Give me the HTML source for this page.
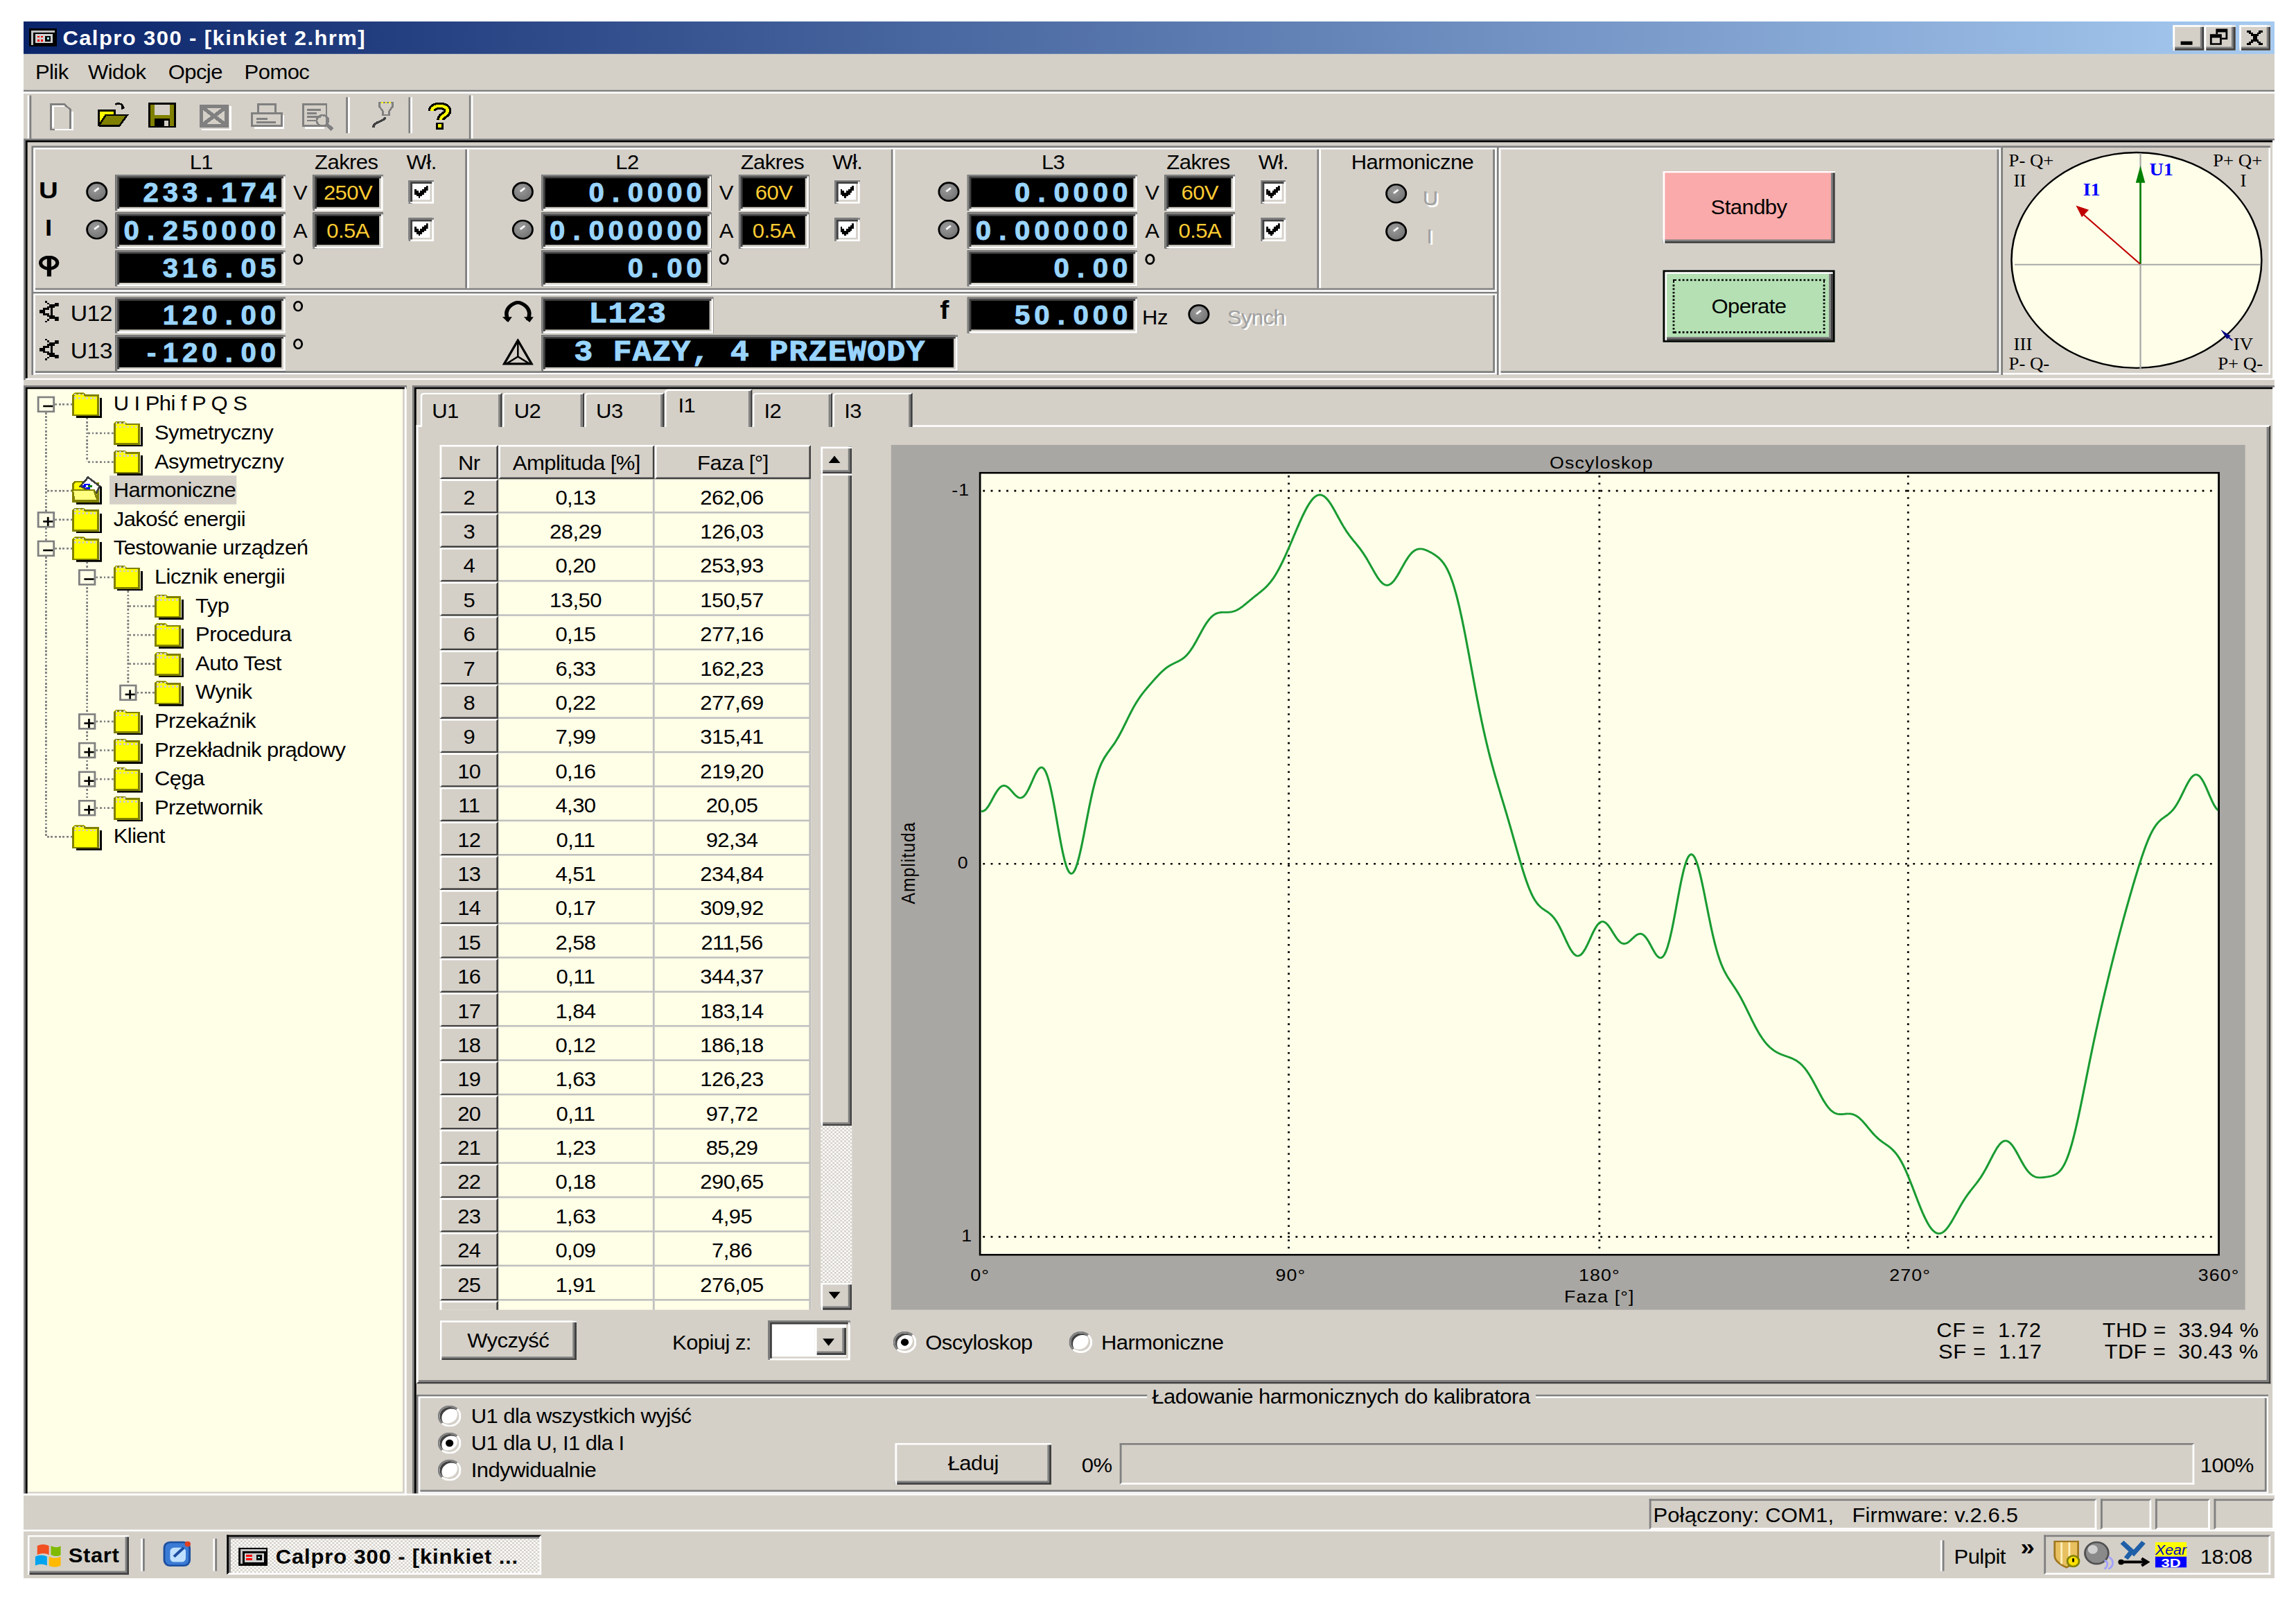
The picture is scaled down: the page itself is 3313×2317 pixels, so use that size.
<!DOCTYPE html><html><head><meta charset="utf-8"><style>
html,body{margin:0;padding:0;background:#fff;}
body{width:3313px;height:2317px;overflow:hidden;position:relative;}
#win{position:absolute;left:34px;top:31px;width:1152px;height:864px;transform:scale(2.8194,2.5995);transform-origin:0 0;background:#D4D0C8;overflow:hidden;font-family:"Liberation Sans",sans-serif;font-size:11px;color:#000;}
.a{position:absolute;box-sizing:border-box;}
.t{position:absolute;white-space:nowrap;line-height:12px;letter-spacing:-0.2px;}
.sunk{box-shadow:inset 1px 1px #808080,inset -1px -1px #fff,inset 2px 2px #404040,inset -2px -2px #D4D0C8;}
.sunk1{box-shadow:inset 1px 1px #808080,inset -1px -1px #fff;}
.rais{background:#D4D0C8;box-shadow:inset 1px 1px #fff,inset -1px -1px #404040,inset -2px -2px #808080;}
.rais1{box-shadow:inset 1px 1px #fff,inset -1px -1px #808080;}
.disp{background:#000;box-shadow:inset 1px 1px #808080,inset -1px -1px #fff,inset 2px 2px #404040,inset -2px -2px #D4D0C8;}
.dt{position:absolute;font-family:"Liberation Mono",monospace;font-weight:bold;color:#99D5FF;white-space:nowrap;}
.led{position:absolute;width:11px;height:11px;border-radius:50%;box-sizing:border-box;border:1px solid #000;background:radial-gradient(circle at 40% 35%,#9a9a9a 0,#858585 45%,#6a6a6a 100%);}
.led:after{content:"";position:absolute;left:2.5px;top:2.5px;width:2.5px;height:1.2px;background:#fff;transform:rotate(-40deg);}
.cb{position:absolute;width:13px;height:13px;background:#fff;box-sizing:border-box;box-shadow:inset 1px 1px #808080,inset -1px -1px #fff,inset 2px 2px #404040,inset -2px -2px #D4D0C8;}
.rad{position:absolute;width:12px;height:12px;border-radius:50%;box-sizing:border-box;background:#fff;border:1px solid;border-color:#808080 #fff #fff #808080;box-shadow:inset 1px 1px #404040, inset -1px -1px #D4D0C8;}

.etch{box-shadow:inset 1px 1px #808080,inset -1px -1px #fff,inset 2px 2px #fff,inset -2px -2px #808080;}
.cedge{box-shadow:inset 1px 1px #808080,inset -1px -1px #fff,inset 2px 2px #000,inset -2px -2px #D4D0C8;}
</style></head><body><div id="win">
<div class="a " style="left:0px;top:0px;width:1152px;height:18px;background:linear-gradient(to right,#0A246A,#A6CAF0);"></div>
<svg class="a" style="left:2px;top:1px" width="16" height="16" viewBox="0 0 16 16" shape-rendering="crispEdges">
<rect x="1" y="3" width="14" height="10" fill="#000"/><rect x="2" y="4" width="12" height="8" fill="#C0C0C0"/>
<rect x="3" y="5" width="11" height="7" fill="#000"/><rect x="4" y="6" width="9" height="5" fill="#D0D0D0"/>
<rect x="5" y="7" width="1" height="1" fill="#f00"/><rect x="5" y="9" width="1" height="1" fill="#f00"/><rect x="7" y="7" width="1" height="1" fill="#f00"/><rect x="7" y="9" width="1" height="1" fill="#f00"/>
<rect x="9" y="7" width="3" height="3" fill="#000"/><rect x="10" y="8" width="1" height="1" fill="#9ff"/></svg>
<div class="t " style="left:20px;top:3px;color:#fff;font-weight:bold;font-size:11px;letter-spacing:0.5px;">Calpro 300 - [kinkiet 2.hrm]</div>
<div class="a rais" style="left:1100px;top:2px;width:16px;height:14px;"><div class="a" style="left:4px;top:9px;width:6px;height:2px;background:#000"></div></div>
<div class="a rais" style="left:1116px;top:2px;width:16px;height:14px;"><div class="a" style="left:6px;top:2px;width:6px;height:6px;border:1px solid #000;border-top-width:2px"></div><div class="a" style="left:3px;top:5px;width:6px;height:6px;border:1px solid #000;border-top-width:2px;background:#D4D0C8"></div></div>
<div class="a rais" style="left:1134px;top:2px;width:16px;height:14px;"><svg style="position:absolute;left:0;top:0" width="16" height="14" viewBox="0 0 16 14" shape-rendering="crispEdges"><path d="M4 3h2v1h1v1h2V4h1V3h2v1h-1v1h-1v1h-1v2h1v1h1v1h1v1h-2v-1H9V9H7v1H6v1H4v-1h1V9h1V8h1V6H6V5H5V4H4z" fill="#000"/></svg></div>
<div class="t " style="left:6px;top:22px;">Plik</div>
<div class="t " style="left:33px;top:22px;">Widok</div>
<div class="t " style="left:74px;top:22px;">Opcje</div>
<div class="t " style="left:113px;top:22px;">Pomoc</div>
<div class="a" style="left:0px;top:38px;width:1152px;height:1px;background:#808080"></div>
<div class="a" style="left:0px;top:39px;width:1152px;height:1px;background:#fff"></div>
<div class="a" style="left:2px;top:41px;width:1px;height:24px;background:#fff"></div>
<div class="a" style="left:3px;top:41px;width:1px;height:24px;background:#808080"></div>
<div class="a" style="left:228px;top:41px;width:1px;height:25px;background:#808080"></div>
<div class="a" style="left:229px;top:41px;width:1px;height:25px;background:#fff"></div>
<div class="a" style="left:165px;top:42px;width:1px;height:20px;background:#808080"></div>
<div class="a" style="left:166px;top:42px;width:1px;height:20px;background:#fff"></div>
<div class="a" style="left:197px;top:42px;width:1px;height:20px;background:#808080"></div>
<div class="a" style="left:198px;top:42px;width:1px;height:20px;background:#fff"></div>
<svg class="a" style="left:12px;top:45px" width="16" height="16" viewBox="0 0 16 16" shape-rendering="crispEdges">
<path d="M2 1h7l3 3v11H2z" fill="#D4D0C8" stroke="#808080" stroke-width="1"/><path d="M3 14V2h6" fill="none" stroke="#fff"/><path d="M4 15h9V5" fill="none" stroke="#fff"/></svg>
<svg class="a" style="left:38px;top:44px" width="16" height="16" viewBox="0 0 16 16" shape-rendering="crispEdges">
<path d="M9 2c2-1 4 0 4 2" fill="none" stroke="#000"/><path d="M12 3l2 1-2 1z" fill="#000"/>
<rect x="0" y="5" width="9" height="9" fill="#000"/><rect x="1" y="6" width="7" height="7" fill="#FFFF00"/>
<path d="M1 13L4 8h11l-4 6H1z" fill="#808000" stroke="#000"/></svg>
<svg class="a" style="left:63px;top:44px" width="16" height="16" viewBox="0 0 16 16" shape-rendering="crispEdges">
<rect x="1" y="1" width="14" height="14" fill="#000"/><rect x="2" y="2" width="12" height="12" fill="#808000"/>
<rect x="4" y="2" width="8" height="6" fill="#D4D0C8"/><rect x="4" y="10" width="8" height="4" fill="#000"/><rect x="9" y="11" width="2" height="3" fill="#D4D0C8"/></svg>
<svg class="a" style="left:89px;top:45px" width="18" height="16" viewBox="0 0 18 16" shape-rendering="crispEdges">
<rect x="1" y="1" width="15" height="13" fill="#808080"/><rect x="3" y="3" width="11" height="9" fill="#D4D0C8"/><path d="M3 3l11 9M3 12l11-9" stroke="#808080" stroke-width="2"/><path d="M2 15h15V2" stroke="#fff" fill="none"/></svg>
<svg class="a" style="left:116px;top:45px" width="18" height="16" viewBox="0 0 18 16" shape-rendering="crispEdges">
<path d="M4 1h9v5H4z" fill="none" stroke="#808080"/><path d="M1 6h15v7H1z" fill="#D4D0C8" stroke="#808080"/><path d="M3 9h6M3 11h10" stroke="#808080"/><path d="M2 14h15V7" stroke="#fff" fill="none"/></svg>
<svg class="a" style="left:142px;top:45px" width="18" height="16" viewBox="0 0 18 16" shape-rendering="crispEdges">
<path d="M1 1h12v12H1z" fill="#D4D0C8" stroke="#808080"/><path d="M3 4h7M3 6h5M3 8h7M3 10h5" stroke="#808080"/><circle cx="11" cy="10" r="3" fill="none" stroke="#808080"/><path d="M13 12l3 3" stroke="#808080" stroke-width="2"/><path d="M2 14h10" stroke="#fff"/></svg>
<svg class="a" style="left:178px;top:44px" width="12" height="17" viewBox="0 0 12 17" shape-rendering="crispEdges">
<path d="M4 1h7v2l-2 3v2H6V6L4 3z" fill="#D4D0C8" stroke="#808080"/><path d="M5 1h5" stroke="#ff0" stroke-dasharray="1 1"/><path d="M7 9c0 3-6 2-6 6" fill="none" stroke="#404040" stroke-width="1.2"/></svg>
<svg class="a" style="left:206px;top:44px" width="14" height="16" viewBox="0 0 14 16" shape-rendering="crispEdges">
<path d="M3 5.5c0-3.5 8-3.5 8 0c0 2.5-3.5 2.5-3.5 5" fill="none" stroke="#000" stroke-width="4"/><path d="M3 5.5c0-3.5 8-3.5 8 0c0 2.5-3.5 2.5-3.5 5" fill="none" stroke="#FFFF00" stroke-width="1.6"/><rect x="5" y="12" width="4" height="4" fill="#000"/><rect x="6" y="13" width="2" height="2" fill="#ff0"/></svg>
<div class="a cedge" style="left:0px;top:65px;width:1152px;height:134px;"></div>
<div class="a etch" style="left:4px;top:69px;width:750px;height:81px;"></div>
<div class="a etch" style="left:4px;top:150px;width:750px;height:46px;"></div>
<div class="a etch" style="left:754px;top:69px;width:258px;height:127px;"></div>
<div class="a " style="left:1012px;top:69px;width:138px;height:127px;box-shadow:inset 1px 1px #808080,inset -1px -1px #fff"></div>
<div class="a" style="left:226px;top:71px;width:1px;height:77px;background:#808080"></div>
<div class="a" style="left:227px;top:71px;width:1px;height:77px;background:#fff"></div>
<div class="a" style="left:444px;top:71px;width:1px;height:77px;background:#808080"></div>
<div class="a" style="left:445px;top:71px;width:1px;height:77px;background:#fff"></div>
<div class="a" style="left:662px;top:71px;width:1px;height:77px;background:#808080"></div>
<div class="a" style="left:663px;top:71px;width:1px;height:77px;background:#fff"></div>
<div class="t " style="left:85px;top:72px;">L1</div>
<div class="t " style="left:149px;top:72px;">Zakres</div>
<div class="t " style="left:196px;top:72px;">Wł.</div>
<div class="led" style="left:32px;top:89px"></div>
<div class="led" style="left:32px;top:110px"></div>
<div class="a disp" style="left:47px;top:85px;width:87px;height:20px;"><div class="dt" style="left:2px;right:3.5px;top:0px;height:20px;line-height:20px;text-align:right;font-size:15px;color:#99D5FF;font-family:'Liberation Sans';letter-spacing:0;-webkit-text-stroke:0.35px #99D5FF"><span style="display:inline-block;width:10px;text-align:center"><span style="display:inline-block;transform:scaleX(0.95)">2</span></span><span style="display:inline-block;width:10px;text-align:center"><span style="display:inline-block;transform:scaleX(0.95)">3</span></span><span style="display:inline-block;width:10px;text-align:center"><span style="display:inline-block;transform:scaleX(0.95)">3</span></span><span style="display:inline-block;width:10px;text-align:center"><span style="display:inline-block;transform:scaleX(0.95)">.</span></span><span style="display:inline-block;width:10px;text-align:center"><span style="display:inline-block;transform:scaleX(0.95)">1</span></span><span style="display:inline-block;width:10px;text-align:center"><span style="display:inline-block;transform:scaleX(0.95)">7</span></span><span style="display:inline-block;width:10px;text-align:center"><span style="display:inline-block;transform:scaleX(0.95)">4</span></span></div></div>
<div class="a disp" style="left:47px;top:106px;width:87px;height:20px;"><div class="dt" style="left:2px;right:3.5px;top:0px;height:20px;line-height:20px;text-align:right;font-size:15px;color:#99D5FF;font-family:'Liberation Sans';letter-spacing:0;-webkit-text-stroke:0.35px #99D5FF"><span style="display:inline-block;width:10px;text-align:center"><span style="display:inline-block;transform:scaleX(0.95)">0</span></span><span style="display:inline-block;width:10px;text-align:center"><span style="display:inline-block;transform:scaleX(0.95)">.</span></span><span style="display:inline-block;width:10px;text-align:center"><span style="display:inline-block;transform:scaleX(0.95)">2</span></span><span style="display:inline-block;width:10px;text-align:center"><span style="display:inline-block;transform:scaleX(0.95)">5</span></span><span style="display:inline-block;width:10px;text-align:center"><span style="display:inline-block;transform:scaleX(0.95)">0</span></span><span style="display:inline-block;width:10px;text-align:center"><span style="display:inline-block;transform:scaleX(0.95)">0</span></span><span style="display:inline-block;width:10px;text-align:center"><span style="display:inline-block;transform:scaleX(0.95)">0</span></span><span style="display:inline-block;width:10px;text-align:center"><span style="display:inline-block;transform:scaleX(0.95)">0</span></span></div></div>
<div class="a disp" style="left:47px;top:127px;width:87px;height:20px;"><div class="dt" style="left:2px;right:3.5px;top:0px;height:20px;line-height:20px;text-align:right;font-size:15px;color:#99D5FF;font-family:'Liberation Sans';letter-spacing:0;-webkit-text-stroke:0.35px #99D5FF"><span style="display:inline-block;width:10px;text-align:center"><span style="display:inline-block;transform:scaleX(0.95)">3</span></span><span style="display:inline-block;width:10px;text-align:center"><span style="display:inline-block;transform:scaleX(0.95)">1</span></span><span style="display:inline-block;width:10px;text-align:center"><span style="display:inline-block;transform:scaleX(0.95)">6</span></span><span style="display:inline-block;width:10px;text-align:center"><span style="display:inline-block;transform:scaleX(0.95)">.</span></span><span style="display:inline-block;width:10px;text-align:center"><span style="display:inline-block;transform:scaleX(0.95)">0</span></span><span style="display:inline-block;width:10px;text-align:center"><span style="display:inline-block;transform:scaleX(0.95)">5</span></span></div></div>
<div class="t " style="left:138px;top:89px;">V</div>
<div class="t " style="left:138px;top:110px;">A</div>
<div class="a" style="left:138px;top:129px;width:5px;height:6px;border:1px solid #000;border-radius:50%"></div>
<div class="a disp" style="left:148px;top:85px;width:36px;height:20px;"><div class="t" style="left:0;width:36px;top:4px;text-align:center;color:#FFCC33;font-size:11px;letter-spacing:-0.2px">250V</div></div>
<div class="a disp" style="left:148px;top:106px;width:36px;height:20px;"><div class="t" style="left:0;width:36px;top:4px;text-align:center;color:#FFCC33;font-size:11px;letter-spacing:-0.2px">0.5A</div></div>
<div class="cb" style="left:197px;top:88px"><svg style="position:absolute;left:3px;top:3px" width="7" height="7" viewBox="0 0 7 7" shape-rendering="crispEdges"><path d="M0 2h1v1h1v1h1V3h1V2h1V1h1V0h1v3H6v1H5v1H4v1H3v1H2V6H1V5H0z" fill="#000"/></svg></div>
<div class="cb" style="left:197px;top:109px"><svg style="position:absolute;left:3px;top:3px" width="7" height="7" viewBox="0 0 7 7" shape-rendering="crispEdges"><path d="M0 2h1v1h1v1h1V3h1V2h1V1h1V0h1v3H6v1H5v1H4v1H3v1H2V6H1V5H0z" fill="#000"/></svg></div>
<div class="t " style="left:303px;top:72px;">L2</div>
<div class="t " style="left:367px;top:72px;">Zakres</div>
<div class="t " style="left:414px;top:72px;">Wł.</div>
<div class="led" style="left:250px;top:89px"></div>
<div class="led" style="left:250px;top:110px"></div>
<div class="a disp" style="left:265px;top:85px;width:87px;height:20px;"><div class="dt" style="left:2px;right:3.5px;top:0px;height:20px;line-height:20px;text-align:right;font-size:15px;color:#99D5FF;font-family:'Liberation Sans';letter-spacing:0;-webkit-text-stroke:0.35px #99D5FF"><span style="display:inline-block;width:10px;text-align:center"><span style="display:inline-block;transform:scaleX(0.95)">0</span></span><span style="display:inline-block;width:10px;text-align:center"><span style="display:inline-block;transform:scaleX(0.95)">.</span></span><span style="display:inline-block;width:10px;text-align:center"><span style="display:inline-block;transform:scaleX(0.95)">0</span></span><span style="display:inline-block;width:10px;text-align:center"><span style="display:inline-block;transform:scaleX(0.95)">0</span></span><span style="display:inline-block;width:10px;text-align:center"><span style="display:inline-block;transform:scaleX(0.95)">0</span></span><span style="display:inline-block;width:10px;text-align:center"><span style="display:inline-block;transform:scaleX(0.95)">0</span></span></div></div>
<div class="a disp" style="left:265px;top:106px;width:87px;height:20px;"><div class="dt" style="left:2px;right:3.5px;top:0px;height:20px;line-height:20px;text-align:right;font-size:15px;color:#99D5FF;font-family:'Liberation Sans';letter-spacing:0;-webkit-text-stroke:0.35px #99D5FF"><span style="display:inline-block;width:10px;text-align:center"><span style="display:inline-block;transform:scaleX(0.95)">0</span></span><span style="display:inline-block;width:10px;text-align:center"><span style="display:inline-block;transform:scaleX(0.95)">.</span></span><span style="display:inline-block;width:10px;text-align:center"><span style="display:inline-block;transform:scaleX(0.95)">0</span></span><span style="display:inline-block;width:10px;text-align:center"><span style="display:inline-block;transform:scaleX(0.95)">0</span></span><span style="display:inline-block;width:10px;text-align:center"><span style="display:inline-block;transform:scaleX(0.95)">0</span></span><span style="display:inline-block;width:10px;text-align:center"><span style="display:inline-block;transform:scaleX(0.95)">0</span></span><span style="display:inline-block;width:10px;text-align:center"><span style="display:inline-block;transform:scaleX(0.95)">0</span></span><span style="display:inline-block;width:10px;text-align:center"><span style="display:inline-block;transform:scaleX(0.95)">0</span></span></div></div>
<div class="a disp" style="left:265px;top:127px;width:87px;height:20px;"><div class="dt" style="left:2px;right:3.5px;top:0px;height:20px;line-height:20px;text-align:right;font-size:15px;color:#99D5FF;font-family:'Liberation Sans';letter-spacing:0;-webkit-text-stroke:0.35px #99D5FF"><span style="display:inline-block;width:10px;text-align:center"><span style="display:inline-block;transform:scaleX(0.95)">0</span></span><span style="display:inline-block;width:10px;text-align:center"><span style="display:inline-block;transform:scaleX(0.95)">.</span></span><span style="display:inline-block;width:10px;text-align:center"><span style="display:inline-block;transform:scaleX(0.95)">0</span></span><span style="display:inline-block;width:10px;text-align:center"><span style="display:inline-block;transform:scaleX(0.95)">0</span></span></div></div>
<div class="t " style="left:356px;top:89px;">V</div>
<div class="t " style="left:356px;top:110px;">A</div>
<div class="a" style="left:356px;top:129px;width:5px;height:6px;border:1px solid #000;border-radius:50%"></div>
<div class="a disp" style="left:366px;top:85px;width:36px;height:20px;"><div class="t" style="left:0;width:36px;top:4px;text-align:center;color:#FFCC33;font-size:11px;letter-spacing:-0.2px">60V</div></div>
<div class="a disp" style="left:366px;top:106px;width:36px;height:20px;"><div class="t" style="left:0;width:36px;top:4px;text-align:center;color:#FFCC33;font-size:11px;letter-spacing:-0.2px">0.5A</div></div>
<div class="cb" style="left:415px;top:88px"><svg style="position:absolute;left:3px;top:3px" width="7" height="7" viewBox="0 0 7 7" shape-rendering="crispEdges"><path d="M0 2h1v1h1v1h1V3h1V2h1V1h1V0h1v3H6v1H5v1H4v1H3v1H2V6H1V5H0z" fill="#000"/></svg></div>
<div class="cb" style="left:415px;top:109px"><svg style="position:absolute;left:3px;top:3px" width="7" height="7" viewBox="0 0 7 7" shape-rendering="crispEdges"><path d="M0 2h1v1h1v1h1V3h1V2h1V1h1V0h1v3H6v1H5v1H4v1H3v1H2V6H1V5H0z" fill="#000"/></svg></div>
<div class="t " style="left:521px;top:72px;">L3</div>
<div class="t " style="left:585px;top:72px;">Zakres</div>
<div class="t " style="left:632px;top:72px;">Wł.</div>
<div class="led" style="left:468px;top:89px"></div>
<div class="led" style="left:468px;top:110px"></div>
<div class="a disp" style="left:483px;top:85px;width:87px;height:20px;"><div class="dt" style="left:2px;right:3.5px;top:0px;height:20px;line-height:20px;text-align:right;font-size:15px;color:#99D5FF;font-family:'Liberation Sans';letter-spacing:0;-webkit-text-stroke:0.35px #99D5FF"><span style="display:inline-block;width:10px;text-align:center"><span style="display:inline-block;transform:scaleX(0.95)">0</span></span><span style="display:inline-block;width:10px;text-align:center"><span style="display:inline-block;transform:scaleX(0.95)">.</span></span><span style="display:inline-block;width:10px;text-align:center"><span style="display:inline-block;transform:scaleX(0.95)">0</span></span><span style="display:inline-block;width:10px;text-align:center"><span style="display:inline-block;transform:scaleX(0.95)">0</span></span><span style="display:inline-block;width:10px;text-align:center"><span style="display:inline-block;transform:scaleX(0.95)">0</span></span><span style="display:inline-block;width:10px;text-align:center"><span style="display:inline-block;transform:scaleX(0.95)">0</span></span></div></div>
<div class="a disp" style="left:483px;top:106px;width:87px;height:20px;"><div class="dt" style="left:2px;right:3.5px;top:0px;height:20px;line-height:20px;text-align:right;font-size:15px;color:#99D5FF;font-family:'Liberation Sans';letter-spacing:0;-webkit-text-stroke:0.35px #99D5FF"><span style="display:inline-block;width:10px;text-align:center"><span style="display:inline-block;transform:scaleX(0.95)">0</span></span><span style="display:inline-block;width:10px;text-align:center"><span style="display:inline-block;transform:scaleX(0.95)">.</span></span><span style="display:inline-block;width:10px;text-align:center"><span style="display:inline-block;transform:scaleX(0.95)">0</span></span><span style="display:inline-block;width:10px;text-align:center"><span style="display:inline-block;transform:scaleX(0.95)">0</span></span><span style="display:inline-block;width:10px;text-align:center"><span style="display:inline-block;transform:scaleX(0.95)">0</span></span><span style="display:inline-block;width:10px;text-align:center"><span style="display:inline-block;transform:scaleX(0.95)">0</span></span><span style="display:inline-block;width:10px;text-align:center"><span style="display:inline-block;transform:scaleX(0.95)">0</span></span><span style="display:inline-block;width:10px;text-align:center"><span style="display:inline-block;transform:scaleX(0.95)">0</span></span></div></div>
<div class="a disp" style="left:483px;top:127px;width:87px;height:20px;"><div class="dt" style="left:2px;right:3.5px;top:0px;height:20px;line-height:20px;text-align:right;font-size:15px;color:#99D5FF;font-family:'Liberation Sans';letter-spacing:0;-webkit-text-stroke:0.35px #99D5FF"><span style="display:inline-block;width:10px;text-align:center"><span style="display:inline-block;transform:scaleX(0.95)">0</span></span><span style="display:inline-block;width:10px;text-align:center"><span style="display:inline-block;transform:scaleX(0.95)">.</span></span><span style="display:inline-block;width:10px;text-align:center"><span style="display:inline-block;transform:scaleX(0.95)">0</span></span><span style="display:inline-block;width:10px;text-align:center"><span style="display:inline-block;transform:scaleX(0.95)">0</span></span></div></div>
<div class="t " style="left:574px;top:89px;">V</div>
<div class="t " style="left:574px;top:110px;">A</div>
<div class="a" style="left:574px;top:129px;width:5px;height:6px;border:1px solid #000;border-radius:50%"></div>
<div class="a disp" style="left:584px;top:85px;width:36px;height:20px;"><div class="t" style="left:0;width:36px;top:4px;text-align:center;color:#FFCC33;font-size:11px;letter-spacing:-0.2px">60V</div></div>
<div class="a disp" style="left:584px;top:106px;width:36px;height:20px;"><div class="t" style="left:0;width:36px;top:4px;text-align:center;color:#FFCC33;font-size:11px;letter-spacing:-0.2px">0.5A</div></div>
<div class="cb" style="left:633px;top:88px"><svg style="position:absolute;left:3px;top:3px" width="7" height="7" viewBox="0 0 7 7" shape-rendering="crispEdges"><path d="M0 2h1v1h1v1h1V3h1V2h1V1h1V0h1v3H6v1H5v1H4v1H3v1H2V6H1V5H0z" fill="#000"/></svg></div>
<div class="cb" style="left:633px;top:109px"><svg style="position:absolute;left:3px;top:3px" width="7" height="7" viewBox="0 0 7 7" shape-rendering="crispEdges"><path d="M0 2h1v1h1v1h1V3h1V2h1V1h1V0h1v3H6v1H5v1H4v1H3v1H2V6H1V5H0z" fill="#000"/></svg></div>
<div class="t " style="left:8px;top:88px;font-weight:bold;font-size:13px;letter-spacing:0;transform:scaleX(1.05)">U</div>
<div class="t " style="left:11px;top:109px;font-weight:bold;font-size:13px;letter-spacing:0">I</div>
<svg class="a" style="left:7px;top:130px" width="12" height="12" viewBox="0 0 12 12"><ellipse cx="6" cy="4" rx="4.3" ry="3.2" fill="none" stroke="#000" stroke-width="1.8"/><rect x="5" y="0" width="2.2" height="11.5" fill="#000"/></svg>
<div class="t " style="left:679.5px;top:72px;">Harmoniczne</div>
<div class="led" style="left:697px;top:90px"></div>
<div class="led" style="left:697px;top:111px"></div>
<div class="t " style="left:716px;top:92px;text-shadow:1px 1px #fff;color:#A0A0A0">U</div>
<div class="t " style="left:718px;top:113px;color:#A0A0A0;text-shadow:1px 1px #fff">I</div>
<svg class="a" style="left:8px;top:155px" width="10" height="12" viewBox="0 0 10 12" shape-rendering="crispEdges"><path d="M3 0h1v1h-1zM4 1h1v1h-1zM8 1h1v1h-1zM9 1h1v1h-1zM5 2h1v1h-1zM6 2h1v1h-1zM7 2h1v1h-1zM8 2h1v1h-1zM9 2h1v1h-1zM4 3h1v1h-1zM5 3h1v1h-1zM6 3h1v1h-1zM7 3h1v1h-1zM2 4h1v1h-1zM3 4h1v1h-1zM4 4h1v1h-1zM6 4h1v1h-1zM0 5h1v1h-1zM1 5h1v1h-1zM2 5h1v1h-1zM6 5h1v1h-1zM0 6h1v1h-1zM1 6h1v1h-1zM2 6h1v1h-1zM6 6h1v1h-1zM2 7h1v1h-1zM3 7h1v1h-1zM4 7h1v1h-1zM6 7h1v1h-1zM4 8h1v1h-1zM5 8h1v1h-1zM6 8h1v1h-1zM7 8h1v1h-1zM5 9h1v1h-1zM6 9h1v1h-1zM7 9h1v1h-1zM8 9h1v1h-1zM9 9h1v1h-1zM4 10h1v1h-1zM8 10h1v1h-1zM9 10h1v1h-1zM3 11h1v1h-1z" fill="#000"/></svg>
<svg class="a" style="left:8px;top:176px" width="10" height="12" viewBox="0 0 10 12" shape-rendering="crispEdges"><path d="M3 0h1v1h-1zM4 1h1v1h-1zM8 1h1v1h-1zM9 1h1v1h-1zM5 2h1v1h-1zM6 2h1v1h-1zM7 2h1v1h-1zM8 2h1v1h-1zM9 2h1v1h-1zM4 3h1v1h-1zM5 3h1v1h-1zM6 3h1v1h-1zM7 3h1v1h-1zM2 4h1v1h-1zM3 4h1v1h-1zM4 4h1v1h-1zM6 4h1v1h-1zM0 5h1v1h-1zM1 5h1v1h-1zM2 5h1v1h-1zM6 5h1v1h-1zM0 6h1v1h-1zM1 6h1v1h-1zM2 6h1v1h-1zM6 6h1v1h-1zM2 7h1v1h-1zM3 7h1v1h-1zM4 7h1v1h-1zM6 7h1v1h-1zM4 8h1v1h-1zM5 8h1v1h-1zM6 8h1v1h-1zM7 8h1v1h-1zM5 9h1v1h-1zM6 9h1v1h-1zM7 9h1v1h-1zM8 9h1v1h-1zM9 9h1v1h-1zM4 10h1v1h-1zM8 10h1v1h-1zM9 10h1v1h-1zM3 11h1v1h-1z" fill="#000"/></svg>
<div class="t " style="left:24px;top:156px;font-size:12px">U12</div>
<div class="t " style="left:24px;top:177px;font-size:12px">U13</div>
<div class="a disp" style="left:47px;top:153px;width:87px;height:20px;"><div class="dt" style="left:2px;right:3.5px;top:0px;height:20px;line-height:20px;text-align:right;font-size:15px;color:#99D5FF;font-family:'Liberation Sans';letter-spacing:0;-webkit-text-stroke:0.35px #99D5FF"><span style="display:inline-block;width:10px;text-align:center"><span style="display:inline-block;transform:scaleX(0.95)">1</span></span><span style="display:inline-block;width:10px;text-align:center"><span style="display:inline-block;transform:scaleX(0.95)">2</span></span><span style="display:inline-block;width:10px;text-align:center"><span style="display:inline-block;transform:scaleX(0.95)">0</span></span><span style="display:inline-block;width:10px;text-align:center"><span style="display:inline-block;transform:scaleX(0.95)">.</span></span><span style="display:inline-block;width:10px;text-align:center"><span style="display:inline-block;transform:scaleX(0.95)">0</span></span><span style="display:inline-block;width:10px;text-align:center"><span style="display:inline-block;transform:scaleX(0.95)">0</span></span></div></div>
<div class="a disp" style="left:47px;top:174px;width:87px;height:20px;"><div class="dt" style="left:2px;right:3.5px;top:0px;height:20px;line-height:20px;text-align:right;font-size:15px;color:#99D5FF;font-family:'Liberation Sans';letter-spacing:0;-webkit-text-stroke:0.35px #99D5FF"><span style="display:inline-block;width:10px;text-align:center"><span style="display:inline-block;transform:scaleX(0.95)">-</span></span><span style="display:inline-block;width:10px;text-align:center"><span style="display:inline-block;transform:scaleX(0.95)">1</span></span><span style="display:inline-block;width:10px;text-align:center"><span style="display:inline-block;transform:scaleX(0.95)">2</span></span><span style="display:inline-block;width:10px;text-align:center"><span style="display:inline-block;transform:scaleX(0.95)">0</span></span><span style="display:inline-block;width:10px;text-align:center"><span style="display:inline-block;transform:scaleX(0.95)">.</span></span><span style="display:inline-block;width:10px;text-align:center"><span style="display:inline-block;transform:scaleX(0.95)">0</span></span><span style="display:inline-block;width:10px;text-align:center"><span style="display:inline-block;transform:scaleX(0.95)">0</span></span></div></div>
<div class="a" style="left:138px;top:155px;width:5px;height:6px;border:1px solid #000;border-radius:50%"></div>
<div class="a" style="left:138px;top:176px;width:5px;height:6px;border:1px solid #000;border-radius:50%"></div>
<svg class="a" style="left:245px;top:155px" width="16" height="13" viewBox="0 0 16 13">
<path d="M3 11 C0 4 6 1 8 1 C10 1 16 4 13 11" fill="none" stroke="#000" stroke-width="2"/><path d="M0 9h5l-2 3zM11 9h5l-2 3z" fill="#000"/></svg>
<svg class="a" style="left:245px;top:176px" width="16" height="15" viewBox="0 0 16 15">
<path d="M8 1L1 14h14z" fill="none" stroke="#000" stroke-width="1.2"/><path d="M8 1v9M8 10L2 14M8 10l6 4" fill="none" stroke="#000" stroke-width="0.9"/></svg>
<div class="a disp" style="left:265px;top:153px;width:88px;height:20px;"><div class="dt" style="left:2px;right:2px;top:0px;height:20px;line-height:20px;text-align:center;font-size:16px;color:#99D5FF;font-family:'Liberation Mono';letter-spacing:0;-webkit-text-stroke:0.35px #99D5FF"><span style="display:inline-block;width:10px;text-align:center"><span style="display:inline-block;transform:scaleX(1.0)">L</span></span><span style="display:inline-block;width:10px;text-align:center"><span style="display:inline-block;transform:scaleX(1.0)">1</span></span><span style="display:inline-block;width:10px;text-align:center"><span style="display:inline-block;transform:scaleX(1.0)">2</span></span><span style="display:inline-block;width:10px;text-align:center"><span style="display:inline-block;transform:scaleX(1.0)">3</span></span></div></div>
<div class="a disp" style="left:265px;top:174px;width:213px;height:20px;"><div class="dt" style="left:2px;right:2px;top:0px;height:20px;line-height:20px;text-align:center;font-size:16px;color:#99D5FF;font-family:'Liberation Mono';letter-spacing:0;-webkit-text-stroke:0.35px #99D5FF"><span style="display:inline-block;width:10px;text-align:center"><span style="display:inline-block;transform:scaleX(1.0)">3</span></span><span style="display:inline-block;width:10px;text-align:center"><span style="display:inline-block;transform:scaleX(1.0)">&nbsp;</span></span><span style="display:inline-block;width:10px;text-align:center"><span style="display:inline-block;transform:scaleX(1.0)">F</span></span><span style="display:inline-block;width:10px;text-align:center"><span style="display:inline-block;transform:scaleX(1.0)">A</span></span><span style="display:inline-block;width:10px;text-align:center"><span style="display:inline-block;transform:scaleX(1.0)">Z</span></span><span style="display:inline-block;width:10px;text-align:center"><span style="display:inline-block;transform:scaleX(1.0)">Y</span></span><span style="display:inline-block;width:10px;text-align:center"><span style="display:inline-block;transform:scaleX(1.0)">,</span></span><span style="display:inline-block;width:10px;text-align:center"><span style="display:inline-block;transform:scaleX(1.0)">&nbsp;</span></span><span style="display:inline-block;width:10px;text-align:center"><span style="display:inline-block;transform:scaleX(1.0)">4</span></span><span style="display:inline-block;width:10px;text-align:center"><span style="display:inline-block;transform:scaleX(1.0)">&nbsp;</span></span><span style="display:inline-block;width:10px;text-align:center"><span style="display:inline-block;transform:scaleX(1.0)">P</span></span><span style="display:inline-block;width:10px;text-align:center"><span style="display:inline-block;transform:scaleX(1.0)">R</span></span><span style="display:inline-block;width:10px;text-align:center"><span style="display:inline-block;transform:scaleX(1.0)">Z</span></span><span style="display:inline-block;width:10px;text-align:center"><span style="display:inline-block;transform:scaleX(1.0)">E</span></span><span style="display:inline-block;width:10px;text-align:center"><span style="display:inline-block;transform:scaleX(1.0)">W</span></span><span style="display:inline-block;width:10px;text-align:center"><span style="display:inline-block;transform:scaleX(1.0)">O</span></span><span style="display:inline-block;width:10px;text-align:center"><span style="display:inline-block;transform:scaleX(1.0)">D</span></span><span style="display:inline-block;width:10px;text-align:center"><span style="display:inline-block;transform:scaleX(1.0)">Y</span></span></div></div>
<div class="t " style="left:469px;top:154px;font-weight:bold;font-size:14px;letter-spacing:0">f</div>
<div class="a disp" style="left:483px;top:153px;width:87px;height:20px;"><div class="dt" style="left:2px;right:3.5px;top:0px;height:20px;line-height:20px;text-align:right;font-size:15px;color:#99D5FF;font-family:'Liberation Sans';letter-spacing:0;-webkit-text-stroke:0.35px #99D5FF"><span style="display:inline-block;width:10px;text-align:center"><span style="display:inline-block;transform:scaleX(0.95)">5</span></span><span style="display:inline-block;width:10px;text-align:center"><span style="display:inline-block;transform:scaleX(0.95)">0</span></span><span style="display:inline-block;width:10px;text-align:center"><span style="display:inline-block;transform:scaleX(0.95)">.</span></span><span style="display:inline-block;width:10px;text-align:center"><span style="display:inline-block;transform:scaleX(0.95)">0</span></span><span style="display:inline-block;width:10px;text-align:center"><span style="display:inline-block;transform:scaleX(0.95)">0</span></span><span style="display:inline-block;width:10px;text-align:center"><span style="display:inline-block;transform:scaleX(0.95)">0</span></span></div></div>
<div class="t " style="left:572.5px;top:158px;">Hz</div>
<div class="led" style="left:596px;top:157px"></div>
<div class="t " style="left:616px;top:158px;color:#A0A0A0;text-shadow:1px 1px #fff">Synch</div>
<div class="a " style="left:839px;top:83px;width:88px;height:40px;background:#FAAAAA;box-shadow:inset 1px 1px #fff,inset -1px -1px #404040,inset -2px -2px #808080"><div class="t" style="left:0;width:88px;top:14px;text-align:center">Standby</div></div>
<div class="a " style="left:839px;top:138px;width:88px;height:40px;background:#B4E0B4;border:1px solid #000;box-shadow:inset 1px 1px #fff,inset -1px -1px #404040,inset -2px -2px #808080"><div class="a" style="left:4px;top:4px;right:4px;bottom:4px;border:1px dotted #000"></div><div class="t" style="left:0;width:86px;top:13px;text-align:center">Operate</div></div>
<svg class="a" style="left:1013px;top:69px" width="137" height="127" viewBox="0 0 137 127">
<ellipse cx="68.4" cy="63.5" rx="64" ry="59.8" fill="#FFFFE9" stroke="#000" stroke-width="0.9"/>
<line x1="6" y1="65.9" x2="132" y2="65.9" stroke="#A8A8A8" stroke-width="0.8"/>
<line x1="70.4" y1="4" x2="70.4" y2="124" stroke="#A8A8A8" stroke-width="0.8"/>
<line x1="70.4" y1="65.5" x2="70.4" y2="18" stroke="#008000" stroke-width="0.9"/>
<path d="M68 20.5L70.4 11 72.8 20.5z" fill="#008000"/>
<line x1="70.2" y1="65.5" x2="40" y2="37" stroke="#C00000" stroke-width="0.8"/>
<path d="M37.4 33.1l6.6 2.4-3.6 4.1z" fill="#C00000"/>
<path d="M111.5 102l5 3.5-1.8 1.8z" fill="#000080"/><line x1="114" y1="105" x2="117.5" y2="108" stroke="#000080" stroke-width="0.7"/>
<text x="75" y="16.5" font-family="Liberation Serif" font-size="10" font-weight="bold" fill="#0000FF">U1</text>
<text x="41" y="27.5" font-family="Liberation Serif" font-size="10" font-weight="bold" fill="#0000FF">I1</text>
<g font-family="Liberation Serif" font-size="9.5" fill="#000">
<text x="3" y="11.5">P- Q+</text><text x="107.5" y="11.5">P+ Q+</text>
<text x="5.5" y="22.5">II</text><text x="121.5" y="22.5">I</text>
<text x="5.5" y="113.5">III</text><text x="118" y="113.5">IV</text>
<text x="3" y="124">P- Q-</text><text x="110" y="124">P+ Q-</text></g>
</svg>
<div class="a cedge" style="left:0px;top:202px;width:196px;height:616px;background:#FFFFE8"></div>
<div class="a cedge" style="left:199px;top:202px;width:953px;height:616px;"></div>
<div class="a" style="left:11px;top:217px;width:1px;height:235px;background:repeating-linear-gradient(to bottom,#808080 0 1px,transparent 1px 2px)"></div>
<div class="a" style="left:32px;top:218px;width:1px;height:26px;background:repeating-linear-gradient(to bottom,#808080 0 1px,transparent 1px 2px)"></div>
<div class="a" style="left:32px;top:298px;width:1px;height:138px;background:repeating-linear-gradient(to bottom,#808080 0 1px,transparent 1px 2px)"></div>
<div class="a" style="left:53px;top:314px;width:1px;height:58px;background:repeating-linear-gradient(to bottom,#808080 0 1px,transparent 1px 2px)"></div>
<div class="a" style="left:16px;top:212px;width:9px;height:1px;background:repeating-linear-gradient(to right,#808080 0 1px,transparent 1px 2px)"></div>
<div class="a" style="left:33px;top:228px;width:13px;height:1px;background:repeating-linear-gradient(to right,#808080 0 1px,transparent 1px 2px)"></div>
<div class="a" style="left:33px;top:244px;width:13px;height:1px;background:repeating-linear-gradient(to right,#808080 0 1px,transparent 1px 2px)"></div>
<div class="a" style="left:12px;top:260px;width:13px;height:1px;background:repeating-linear-gradient(to right,#808080 0 1px,transparent 1px 2px)"></div>
<div class="a" style="left:16px;top:276px;width:9px;height:1px;background:repeating-linear-gradient(to right,#808080 0 1px,transparent 1px 2px)"></div>
<div class="a" style="left:16px;top:292px;width:9px;height:1px;background:repeating-linear-gradient(to right,#808080 0 1px,transparent 1px 2px)"></div>
<div class="a" style="left:37px;top:308px;width:9px;height:1px;background:repeating-linear-gradient(to right,#808080 0 1px,transparent 1px 2px)"></div>
<div class="a" style="left:54px;top:324px;width:13px;height:1px;background:repeating-linear-gradient(to right,#808080 0 1px,transparent 1px 2px)"></div>
<div class="a" style="left:54px;top:340px;width:13px;height:1px;background:repeating-linear-gradient(to right,#808080 0 1px,transparent 1px 2px)"></div>
<div class="a" style="left:54px;top:356px;width:13px;height:1px;background:repeating-linear-gradient(to right,#808080 0 1px,transparent 1px 2px)"></div>
<div class="a" style="left:58px;top:372px;width:9px;height:1px;background:repeating-linear-gradient(to right,#808080 0 1px,transparent 1px 2px)"></div>
<div class="a" style="left:37px;top:388px;width:9px;height:1px;background:repeating-linear-gradient(to right,#808080 0 1px,transparent 1px 2px)"></div>
<div class="a" style="left:37px;top:404px;width:9px;height:1px;background:repeating-linear-gradient(to right,#808080 0 1px,transparent 1px 2px)"></div>
<div class="a" style="left:37px;top:420px;width:9px;height:1px;background:repeating-linear-gradient(to right,#808080 0 1px,transparent 1px 2px)"></div>
<div class="a" style="left:37px;top:436px;width:9px;height:1px;background:repeating-linear-gradient(to right,#808080 0 1px,transparent 1px 2px)"></div>
<div class="a" style="left:12px;top:452px;width:13px;height:1px;background:repeating-linear-gradient(to right,#808080 0 1px,transparent 1px 2px)"></div>
<div class="a " style="left:7px;top:208px;width:9px;height:9px;background:#FFFFE8;border:1px solid #808080"><div class="a" style="left:2px;top:4px;width:5px;height:1px;background:#000"></div></div>
<svg class="a" style="left:24px;top:206px" width="17" height="14" viewBox="0 0 17 14" shape-rendering="crispEdges">
<path d="M2 0h5l1 1h6v2H1V1z" fill="#FFFF00" stroke="none"/>
<path d="M1.5 12.5V1.5l1-1h4l1 1h6.5v11z" fill="#FFFF00" stroke="#808000"/>
<path d="M2 3h12" stroke="#D4D0C8" stroke-dasharray="1 1"/>
<path d="M2 1h5" stroke="#D4D0C8" stroke-dasharray="1 1"/>
<path d="M3 13.5h12.5V3" fill="none" stroke="#000"/></svg>
<div class="t " style="left:46px;top:206px;">U I Phi f P Q S</div>
<svg class="a" style="left:45px;top:222px" width="17" height="14" viewBox="0 0 17 14" shape-rendering="crispEdges">
<path d="M2 0h5l1 1h6v2H1V1z" fill="#FFFF00" stroke="none"/>
<path d="M1.5 12.5V1.5l1-1h4l1 1h6.5v11z" fill="#FFFF00" stroke="#808000"/>
<path d="M2 3h12" stroke="#D4D0C8" stroke-dasharray="1 1"/>
<path d="M2 1h5" stroke="#D4D0C8" stroke-dasharray="1 1"/>
<path d="M3 13.5h12.5V3" fill="none" stroke="#000"/></svg>
<div class="t " style="left:67px;top:222px;">Symetryczny</div>
<svg class="a" style="left:45px;top:238px" width="17" height="14" viewBox="0 0 17 14" shape-rendering="crispEdges">
<path d="M2 0h5l1 1h6v2H1V1z" fill="#FFFF00" stroke="none"/>
<path d="M1.5 12.5V1.5l1-1h4l1 1h6.5v11z" fill="#FFFF00" stroke="#808000"/>
<path d="M2 3h12" stroke="#D4D0C8" stroke-dasharray="1 1"/>
<path d="M2 1h5" stroke="#D4D0C8" stroke-dasharray="1 1"/>
<path d="M3 13.5h12.5V3" fill="none" stroke="#000"/></svg>
<div class="t " style="left:67px;top:238px;">Asymetryczny</div>
<svg class="a" style="left:24px;top:252px" width="17" height="16" viewBox="0 0 17 16" shape-rendering="crispEdges">
<path d="M1.5 14.5V4.5l1-1h4l1 1h6.5v10z" fill="#FFFF00" stroke="#808000"/>
<path d="M5 6l4-5 6 5-2 4z" fill="#fff" stroke="#404040"/>
<path d="M6 6h2M7 5h3M8 7h2" stroke="#0000FF"/><path d="M9 6h2" stroke="#008000"/>
<path d="M1 8h11l2 6H2z" fill="#FFFF80" stroke="#808000"/>
<path d="M3 15.5h12.5V6" fill="none" stroke="#000"/></svg>
<div class="a " style="left:44px;top:252px;width:65px;height:16px;background:#D4D0C8"></div>
<div class="t " style="left:46px;top:254px;">Harmoniczne</div>
<div class="a " style="left:7px;top:272px;width:9px;height:9px;background:#FFFFE8;border:1px solid #808080"><div class="a" style="left:2px;top:4px;width:5px;height:1px;background:#000"></div><div class="a" style="left:4px;top:2px;width:1px;height:5px;background:#000"></div></div>
<svg class="a" style="left:24px;top:270px" width="17" height="14" viewBox="0 0 17 14" shape-rendering="crispEdges">
<path d="M2 0h5l1 1h6v2H1V1z" fill="#FFFF00" stroke="none"/>
<path d="M1.5 12.5V1.5l1-1h4l1 1h6.5v11z" fill="#FFFF00" stroke="#808000"/>
<path d="M2 3h12" stroke="#D4D0C8" stroke-dasharray="1 1"/>
<path d="M2 1h5" stroke="#D4D0C8" stroke-dasharray="1 1"/>
<path d="M3 13.5h12.5V3" fill="none" stroke="#000"/></svg>
<div class="t " style="left:46px;top:270px;">Jakość energii</div>
<div class="a " style="left:7px;top:288px;width:9px;height:9px;background:#FFFFE8;border:1px solid #808080"><div class="a" style="left:2px;top:4px;width:5px;height:1px;background:#000"></div></div>
<svg class="a" style="left:24px;top:286px" width="17" height="14" viewBox="0 0 17 14" shape-rendering="crispEdges">
<path d="M2 0h5l1 1h6v2H1V1z" fill="#FFFF00" stroke="none"/>
<path d="M1.5 12.5V1.5l1-1h4l1 1h6.5v11z" fill="#FFFF00" stroke="#808000"/>
<path d="M2 3h12" stroke="#D4D0C8" stroke-dasharray="1 1"/>
<path d="M2 1h5" stroke="#D4D0C8" stroke-dasharray="1 1"/>
<path d="M3 13.5h12.5V3" fill="none" stroke="#000"/></svg>
<div class="t " style="left:46px;top:286px;">Testowanie urządzeń</div>
<div class="a " style="left:28px;top:304px;width:9px;height:9px;background:#FFFFE8;border:1px solid #808080"><div class="a" style="left:2px;top:4px;width:5px;height:1px;background:#000"></div></div>
<svg class="a" style="left:45px;top:302px" width="17" height="14" viewBox="0 0 17 14" shape-rendering="crispEdges">
<path d="M2 0h5l1 1h6v2H1V1z" fill="#FFFF00" stroke="none"/>
<path d="M1.5 12.5V1.5l1-1h4l1 1h6.5v11z" fill="#FFFF00" stroke="#808000"/>
<path d="M2 3h12" stroke="#D4D0C8" stroke-dasharray="1 1"/>
<path d="M2 1h5" stroke="#D4D0C8" stroke-dasharray="1 1"/>
<path d="M3 13.5h12.5V3" fill="none" stroke="#000"/></svg>
<div class="t " style="left:67px;top:302px;">Licznik energii</div>
<svg class="a" style="left:66px;top:318px" width="17" height="14" viewBox="0 0 17 14" shape-rendering="crispEdges">
<path d="M2 0h5l1 1h6v2H1V1z" fill="#FFFF00" stroke="none"/>
<path d="M1.5 12.5V1.5l1-1h4l1 1h6.5v11z" fill="#FFFF00" stroke="#808000"/>
<path d="M2 3h12" stroke="#D4D0C8" stroke-dasharray="1 1"/>
<path d="M2 1h5" stroke="#D4D0C8" stroke-dasharray="1 1"/>
<path d="M3 13.5h12.5V3" fill="none" stroke="#000"/></svg>
<div class="t " style="left:88px;top:318px;">Typ</div>
<svg class="a" style="left:66px;top:334px" width="17" height="14" viewBox="0 0 17 14" shape-rendering="crispEdges">
<path d="M2 0h5l1 1h6v2H1V1z" fill="#FFFF00" stroke="none"/>
<path d="M1.5 12.5V1.5l1-1h4l1 1h6.5v11z" fill="#FFFF00" stroke="#808000"/>
<path d="M2 3h12" stroke="#D4D0C8" stroke-dasharray="1 1"/>
<path d="M2 1h5" stroke="#D4D0C8" stroke-dasharray="1 1"/>
<path d="M3 13.5h12.5V3" fill="none" stroke="#000"/></svg>
<div class="t " style="left:88px;top:334px;">Procedura</div>
<svg class="a" style="left:66px;top:350px" width="17" height="14" viewBox="0 0 17 14" shape-rendering="crispEdges">
<path d="M2 0h5l1 1h6v2H1V1z" fill="#FFFF00" stroke="none"/>
<path d="M1.5 12.5V1.5l1-1h4l1 1h6.5v11z" fill="#FFFF00" stroke="#808000"/>
<path d="M2 3h12" stroke="#D4D0C8" stroke-dasharray="1 1"/>
<path d="M2 1h5" stroke="#D4D0C8" stroke-dasharray="1 1"/>
<path d="M3 13.5h12.5V3" fill="none" stroke="#000"/></svg>
<div class="t " style="left:88px;top:350px;">Auto Test</div>
<div class="a " style="left:49px;top:368px;width:9px;height:9px;background:#FFFFE8;border:1px solid #808080"><div class="a" style="left:2px;top:4px;width:5px;height:1px;background:#000"></div><div class="a" style="left:4px;top:2px;width:1px;height:5px;background:#000"></div></div>
<svg class="a" style="left:66px;top:366px" width="17" height="14" viewBox="0 0 17 14" shape-rendering="crispEdges">
<path d="M2 0h5l1 1h6v2H1V1z" fill="#FFFF00" stroke="none"/>
<path d="M1.5 12.5V1.5l1-1h4l1 1h6.5v11z" fill="#FFFF00" stroke="#808000"/>
<path d="M2 3h12" stroke="#D4D0C8" stroke-dasharray="1 1"/>
<path d="M2 1h5" stroke="#D4D0C8" stroke-dasharray="1 1"/>
<path d="M3 13.5h12.5V3" fill="none" stroke="#000"/></svg>
<div class="t " style="left:88px;top:366px;">Wynik</div>
<div class="a " style="left:28px;top:384px;width:9px;height:9px;background:#FFFFE8;border:1px solid #808080"><div class="a" style="left:2px;top:4px;width:5px;height:1px;background:#000"></div><div class="a" style="left:4px;top:2px;width:1px;height:5px;background:#000"></div></div>
<svg class="a" style="left:45px;top:382px" width="17" height="14" viewBox="0 0 17 14" shape-rendering="crispEdges">
<path d="M2 0h5l1 1h6v2H1V1z" fill="#FFFF00" stroke="none"/>
<path d="M1.5 12.5V1.5l1-1h4l1 1h6.5v11z" fill="#FFFF00" stroke="#808000"/>
<path d="M2 3h12" stroke="#D4D0C8" stroke-dasharray="1 1"/>
<path d="M2 1h5" stroke="#D4D0C8" stroke-dasharray="1 1"/>
<path d="M3 13.5h12.5V3" fill="none" stroke="#000"/></svg>
<div class="t " style="left:67px;top:382px;">Przekaźnik</div>
<div class="a " style="left:28px;top:400px;width:9px;height:9px;background:#FFFFE8;border:1px solid #808080"><div class="a" style="left:2px;top:4px;width:5px;height:1px;background:#000"></div><div class="a" style="left:4px;top:2px;width:1px;height:5px;background:#000"></div></div>
<svg class="a" style="left:45px;top:398px" width="17" height="14" viewBox="0 0 17 14" shape-rendering="crispEdges">
<path d="M2 0h5l1 1h6v2H1V1z" fill="#FFFF00" stroke="none"/>
<path d="M1.5 12.5V1.5l1-1h4l1 1h6.5v11z" fill="#FFFF00" stroke="#808000"/>
<path d="M2 3h12" stroke="#D4D0C8" stroke-dasharray="1 1"/>
<path d="M2 1h5" stroke="#D4D0C8" stroke-dasharray="1 1"/>
<path d="M3 13.5h12.5V3" fill="none" stroke="#000"/></svg>
<div class="t " style="left:67px;top:398px;">Przekładnik prądowy</div>
<div class="a " style="left:28px;top:416px;width:9px;height:9px;background:#FFFFE8;border:1px solid #808080"><div class="a" style="left:2px;top:4px;width:5px;height:1px;background:#000"></div><div class="a" style="left:4px;top:2px;width:1px;height:5px;background:#000"></div></div>
<svg class="a" style="left:45px;top:414px" width="17" height="14" viewBox="0 0 17 14" shape-rendering="crispEdges">
<path d="M2 0h5l1 1h6v2H1V1z" fill="#FFFF00" stroke="none"/>
<path d="M1.5 12.5V1.5l1-1h4l1 1h6.5v11z" fill="#FFFF00" stroke="#808000"/>
<path d="M2 3h12" stroke="#D4D0C8" stroke-dasharray="1 1"/>
<path d="M2 1h5" stroke="#D4D0C8" stroke-dasharray="1 1"/>
<path d="M3 13.5h12.5V3" fill="none" stroke="#000"/></svg>
<div class="t " style="left:67px;top:414px;">Cęga</div>
<div class="a " style="left:28px;top:432px;width:9px;height:9px;background:#FFFFE8;border:1px solid #808080"><div class="a" style="left:2px;top:4px;width:5px;height:1px;background:#000"></div><div class="a" style="left:4px;top:2px;width:1px;height:5px;background:#000"></div></div>
<svg class="a" style="left:45px;top:430px" width="17" height="14" viewBox="0 0 17 14" shape-rendering="crispEdges">
<path d="M2 0h5l1 1h6v2H1V1z" fill="#FFFF00" stroke="none"/>
<path d="M1.5 12.5V1.5l1-1h4l1 1h6.5v11z" fill="#FFFF00" stroke="#808000"/>
<path d="M2 3h12" stroke="#D4D0C8" stroke-dasharray="1 1"/>
<path d="M2 1h5" stroke="#D4D0C8" stroke-dasharray="1 1"/>
<path d="M3 13.5h12.5V3" fill="none" stroke="#000"/></svg>
<div class="t " style="left:67px;top:430px;">Przetwornik</div>
<svg class="a" style="left:24px;top:446px" width="17" height="14" viewBox="0 0 17 14" shape-rendering="crispEdges">
<path d="M2 0h5l1 1h6v2H1V1z" fill="#FFFF00" stroke="none"/>
<path d="M1.5 12.5V1.5l1-1h4l1 1h6.5v11z" fill="#FFFF00" stroke="#808000"/>
<path d="M2 3h12" stroke="#D4D0C8" stroke-dasharray="1 1"/>
<path d="M2 1h5" stroke="#D4D0C8" stroke-dasharray="1 1"/>
<path d="M3 13.5h12.5V3" fill="none" stroke="#000"/></svg>
<div class="t " style="left:46px;top:446px;">Klient</div>
<div class="a " style="left:201px;top:224px;width:949px;height:532px;background:#D4D0C8;border-left:1px solid #fff;border-top:1px solid #fff;box-shadow:inset -1px -1px #808080, -0px 0 #000;border-right:1px solid #404040;border-bottom:1px solid #404040"></div>
<div class="a " style="left:203px;top:206px;width:42px;height:19px;background:#D4D0C8;border-top:1px solid #fff;border-left:1px solid #fff;border-right:1px solid #404040;box-shadow:inset -1px 0 #808080;border-top-left-radius:2px;"><div class="t" style="left:5px;top:3px">U1</div></div>
<div class="a " style="left:245px;top:206px;width:42px;height:19px;background:#D4D0C8;border-top:1px solid #fff;border-left:1px solid #fff;border-right:1px solid #404040;box-shadow:inset -1px 0 #808080;border-top-left-radius:2px;"><div class="t" style="left:5px;top:3px">U2</div></div>
<div class="a " style="left:287px;top:206px;width:41px;height:19px;background:#D4D0C8;border-top:1px solid #fff;border-left:1px solid #fff;border-right:1px solid #404040;box-shadow:inset -1px 0 #808080;border-top-left-radius:2px;"><div class="t" style="left:5px;top:3px">U3</div></div>
<div class="a " style="left:328px;top:204px;width:45px;height:21px;background:#D4D0C8;border-top:1px solid #fff;border-left:1px solid #fff;border-right:1px solid #404040;box-shadow:inset -1px 0 #808080;border-top-left-radius:2px;"><div class="t" style="left:6px;top:2px">I1</div></div>
<div class="a " style="left:373px;top:206px;width:41px;height:19px;background:#D4D0C8;border-top:1px solid #fff;border-left:1px solid #fff;border-right:1px solid #404040;box-shadow:inset -1px 0 #808080;border-top-left-radius:2px;"><div class="t" style="left:5px;top:3px">I2</div></div>
<div class="a " style="left:414px;top:206px;width:41px;height:19px;background:#D4D0C8;border-top:1px solid #fff;border-left:1px solid #fff;border-right:1px solid #404040;box-shadow:inset -1px 0 #808080;border-top-left-radius:2px;"><div class="t" style="left:5px;top:3px">I3</div></div>
<div class="a" style="left:213px;top:235px;width:190px;height:480px;overflow:hidden;background:#FFFFE8">
<div class="a" style="left:0px;top:0;width:30px;height:19px;background:#D4D0C8;border-top:1px solid #fff;border-left:1px solid #fff;border-right:1px solid #404040;border-bottom:1px solid #404040"><div class="t" style="left:0;right:0;top:3px;text-align:center">Nr</div></div>
<div class="a" style="left:30px;top:0;width:80px;height:19px;background:#D4D0C8;border-top:1px solid #fff;border-left:1px solid #fff;border-right:1px solid #404040;border-bottom:1px solid #404040"><div class="t" style="left:0;right:0;top:3px;text-align:center">Amplituda [%]</div></div>
<div class="a" style="left:110px;top:0;width:80px;height:19px;background:#D4D0C8;border-top:1px solid #fff;border-left:1px solid #fff;border-right:1px solid #404040;border-bottom:1px solid #404040"><div class="t" style="left:0;right:0;top:3px;text-align:center">Faza [°]</div></div>
<div class="a" style="left:0;top:19px;width:30px;height:19px;background:#D4D0C8;border-top:1px solid #fff;border-left:1px solid #fff;border-right:1px solid #404040;border-bottom:1px solid #404040"><div class="t" style="left:0;right:0;top:3px;text-align:center">2</div></div>
<div class="a" style="left:30px;top:19px;width:80px;height:19px;border-right:1px solid #C0C0C0;border-bottom:1px solid #C0C0C0"><div class="t" style="left:0;right:0;top:4px;text-align:center">0,13</div></div>
<div class="a" style="left:110px;top:19px;width:80px;height:19px;border-right:1px solid #C0C0C0;border-bottom:1px solid #C0C0C0"><div class="t" style="left:0;right:0;top:4px;text-align:center">262,06</div></div>
<div class="a" style="left:0;top:38px;width:30px;height:19px;background:#D4D0C8;border-top:1px solid #fff;border-left:1px solid #fff;border-right:1px solid #404040;border-bottom:1px solid #404040"><div class="t" style="left:0;right:0;top:3px;text-align:center">3</div></div>
<div class="a" style="left:30px;top:38px;width:80px;height:19px;border-right:1px solid #C0C0C0;border-bottom:1px solid #C0C0C0"><div class="t" style="left:0;right:0;top:4px;text-align:center">28,29</div></div>
<div class="a" style="left:110px;top:38px;width:80px;height:19px;border-right:1px solid #C0C0C0;border-bottom:1px solid #C0C0C0"><div class="t" style="left:0;right:0;top:4px;text-align:center">126,03</div></div>
<div class="a" style="left:0;top:57px;width:30px;height:19px;background:#D4D0C8;border-top:1px solid #fff;border-left:1px solid #fff;border-right:1px solid #404040;border-bottom:1px solid #404040"><div class="t" style="left:0;right:0;top:3px;text-align:center">4</div></div>
<div class="a" style="left:30px;top:57px;width:80px;height:19px;border-right:1px solid #C0C0C0;border-bottom:1px solid #C0C0C0"><div class="t" style="left:0;right:0;top:4px;text-align:center">0,20</div></div>
<div class="a" style="left:110px;top:57px;width:80px;height:19px;border-right:1px solid #C0C0C0;border-bottom:1px solid #C0C0C0"><div class="t" style="left:0;right:0;top:4px;text-align:center">253,93</div></div>
<div class="a" style="left:0;top:76px;width:30px;height:19px;background:#D4D0C8;border-top:1px solid #fff;border-left:1px solid #fff;border-right:1px solid #404040;border-bottom:1px solid #404040"><div class="t" style="left:0;right:0;top:3px;text-align:center">5</div></div>
<div class="a" style="left:30px;top:76px;width:80px;height:19px;border-right:1px solid #C0C0C0;border-bottom:1px solid #C0C0C0"><div class="t" style="left:0;right:0;top:4px;text-align:center">13,50</div></div>
<div class="a" style="left:110px;top:76px;width:80px;height:19px;border-right:1px solid #C0C0C0;border-bottom:1px solid #C0C0C0"><div class="t" style="left:0;right:0;top:4px;text-align:center">150,57</div></div>
<div class="a" style="left:0;top:95px;width:30px;height:19px;background:#D4D0C8;border-top:1px solid #fff;border-left:1px solid #fff;border-right:1px solid #404040;border-bottom:1px solid #404040"><div class="t" style="left:0;right:0;top:3px;text-align:center">6</div></div>
<div class="a" style="left:30px;top:95px;width:80px;height:19px;border-right:1px solid #C0C0C0;border-bottom:1px solid #C0C0C0"><div class="t" style="left:0;right:0;top:4px;text-align:center">0,15</div></div>
<div class="a" style="left:110px;top:95px;width:80px;height:19px;border-right:1px solid #C0C0C0;border-bottom:1px solid #C0C0C0"><div class="t" style="left:0;right:0;top:4px;text-align:center">277,16</div></div>
<div class="a" style="left:0;top:114px;width:30px;height:19px;background:#D4D0C8;border-top:1px solid #fff;border-left:1px solid #fff;border-right:1px solid #404040;border-bottom:1px solid #404040"><div class="t" style="left:0;right:0;top:3px;text-align:center">7</div></div>
<div class="a" style="left:30px;top:114px;width:80px;height:19px;border-right:1px solid #C0C0C0;border-bottom:1px solid #C0C0C0"><div class="t" style="left:0;right:0;top:4px;text-align:center">6,33</div></div>
<div class="a" style="left:110px;top:114px;width:80px;height:19px;border-right:1px solid #C0C0C0;border-bottom:1px solid #C0C0C0"><div class="t" style="left:0;right:0;top:4px;text-align:center">162,23</div></div>
<div class="a" style="left:0;top:133px;width:30px;height:19px;background:#D4D0C8;border-top:1px solid #fff;border-left:1px solid #fff;border-right:1px solid #404040;border-bottom:1px solid #404040"><div class="t" style="left:0;right:0;top:3px;text-align:center">8</div></div>
<div class="a" style="left:30px;top:133px;width:80px;height:19px;border-right:1px solid #C0C0C0;border-bottom:1px solid #C0C0C0"><div class="t" style="left:0;right:0;top:4px;text-align:center">0,22</div></div>
<div class="a" style="left:110px;top:133px;width:80px;height:19px;border-right:1px solid #C0C0C0;border-bottom:1px solid #C0C0C0"><div class="t" style="left:0;right:0;top:4px;text-align:center">277,69</div></div>
<div class="a" style="left:0;top:152px;width:30px;height:19px;background:#D4D0C8;border-top:1px solid #fff;border-left:1px solid #fff;border-right:1px solid #404040;border-bottom:1px solid #404040"><div class="t" style="left:0;right:0;top:3px;text-align:center">9</div></div>
<div class="a" style="left:30px;top:152px;width:80px;height:19px;border-right:1px solid #C0C0C0;border-bottom:1px solid #C0C0C0"><div class="t" style="left:0;right:0;top:4px;text-align:center">7,99</div></div>
<div class="a" style="left:110px;top:152px;width:80px;height:19px;border-right:1px solid #C0C0C0;border-bottom:1px solid #C0C0C0"><div class="t" style="left:0;right:0;top:4px;text-align:center">315,41</div></div>
<div class="a" style="left:0;top:171px;width:30px;height:19px;background:#D4D0C8;border-top:1px solid #fff;border-left:1px solid #fff;border-right:1px solid #404040;border-bottom:1px solid #404040"><div class="t" style="left:0;right:0;top:3px;text-align:center">10</div></div>
<div class="a" style="left:30px;top:171px;width:80px;height:19px;border-right:1px solid #C0C0C0;border-bottom:1px solid #C0C0C0"><div class="t" style="left:0;right:0;top:4px;text-align:center">0,16</div></div>
<div class="a" style="left:110px;top:171px;width:80px;height:19px;border-right:1px solid #C0C0C0;border-bottom:1px solid #C0C0C0"><div class="t" style="left:0;right:0;top:4px;text-align:center">219,20</div></div>
<div class="a" style="left:0;top:190px;width:30px;height:19px;background:#D4D0C8;border-top:1px solid #fff;border-left:1px solid #fff;border-right:1px solid #404040;border-bottom:1px solid #404040"><div class="t" style="left:0;right:0;top:3px;text-align:center">11</div></div>
<div class="a" style="left:30px;top:190px;width:80px;height:19px;border-right:1px solid #C0C0C0;border-bottom:1px solid #C0C0C0"><div class="t" style="left:0;right:0;top:4px;text-align:center">4,30</div></div>
<div class="a" style="left:110px;top:190px;width:80px;height:19px;border-right:1px solid #C0C0C0;border-bottom:1px solid #C0C0C0"><div class="t" style="left:0;right:0;top:4px;text-align:center">20,05</div></div>
<div class="a" style="left:0;top:209px;width:30px;height:19px;background:#D4D0C8;border-top:1px solid #fff;border-left:1px solid #fff;border-right:1px solid #404040;border-bottom:1px solid #404040"><div class="t" style="left:0;right:0;top:3px;text-align:center">12</div></div>
<div class="a" style="left:30px;top:209px;width:80px;height:19px;border-right:1px solid #C0C0C0;border-bottom:1px solid #C0C0C0"><div class="t" style="left:0;right:0;top:4px;text-align:center">0,11</div></div>
<div class="a" style="left:110px;top:209px;width:80px;height:19px;border-right:1px solid #C0C0C0;border-bottom:1px solid #C0C0C0"><div class="t" style="left:0;right:0;top:4px;text-align:center">92,34</div></div>
<div class="a" style="left:0;top:228px;width:30px;height:19px;background:#D4D0C8;border-top:1px solid #fff;border-left:1px solid #fff;border-right:1px solid #404040;border-bottom:1px solid #404040"><div class="t" style="left:0;right:0;top:3px;text-align:center">13</div></div>
<div class="a" style="left:30px;top:228px;width:80px;height:19px;border-right:1px solid #C0C0C0;border-bottom:1px solid #C0C0C0"><div class="t" style="left:0;right:0;top:4px;text-align:center">4,51</div></div>
<div class="a" style="left:110px;top:228px;width:80px;height:19px;border-right:1px solid #C0C0C0;border-bottom:1px solid #C0C0C0"><div class="t" style="left:0;right:0;top:4px;text-align:center">234,84</div></div>
<div class="a" style="left:0;top:247px;width:30px;height:19px;background:#D4D0C8;border-top:1px solid #fff;border-left:1px solid #fff;border-right:1px solid #404040;border-bottom:1px solid #404040"><div class="t" style="left:0;right:0;top:3px;text-align:center">14</div></div>
<div class="a" style="left:30px;top:247px;width:80px;height:19px;border-right:1px solid #C0C0C0;border-bottom:1px solid #C0C0C0"><div class="t" style="left:0;right:0;top:4px;text-align:center">0,17</div></div>
<div class="a" style="left:110px;top:247px;width:80px;height:19px;border-right:1px solid #C0C0C0;border-bottom:1px solid #C0C0C0"><div class="t" style="left:0;right:0;top:4px;text-align:center">309,92</div></div>
<div class="a" style="left:0;top:266px;width:30px;height:19px;background:#D4D0C8;border-top:1px solid #fff;border-left:1px solid #fff;border-right:1px solid #404040;border-bottom:1px solid #404040"><div class="t" style="left:0;right:0;top:3px;text-align:center">15</div></div>
<div class="a" style="left:30px;top:266px;width:80px;height:19px;border-right:1px solid #C0C0C0;border-bottom:1px solid #C0C0C0"><div class="t" style="left:0;right:0;top:4px;text-align:center">2,58</div></div>
<div class="a" style="left:110px;top:266px;width:80px;height:19px;border-right:1px solid #C0C0C0;border-bottom:1px solid #C0C0C0"><div class="t" style="left:0;right:0;top:4px;text-align:center">211,56</div></div>
<div class="a" style="left:0;top:285px;width:30px;height:19px;background:#D4D0C8;border-top:1px solid #fff;border-left:1px solid #fff;border-right:1px solid #404040;border-bottom:1px solid #404040"><div class="t" style="left:0;right:0;top:3px;text-align:center">16</div></div>
<div class="a" style="left:30px;top:285px;width:80px;height:19px;border-right:1px solid #C0C0C0;border-bottom:1px solid #C0C0C0"><div class="t" style="left:0;right:0;top:4px;text-align:center">0,11</div></div>
<div class="a" style="left:110px;top:285px;width:80px;height:19px;border-right:1px solid #C0C0C0;border-bottom:1px solid #C0C0C0"><div class="t" style="left:0;right:0;top:4px;text-align:center">344,37</div></div>
<div class="a" style="left:0;top:304px;width:30px;height:19px;background:#D4D0C8;border-top:1px solid #fff;border-left:1px solid #fff;border-right:1px solid #404040;border-bottom:1px solid #404040"><div class="t" style="left:0;right:0;top:3px;text-align:center">17</div></div>
<div class="a" style="left:30px;top:304px;width:80px;height:19px;border-right:1px solid #C0C0C0;border-bottom:1px solid #C0C0C0"><div class="t" style="left:0;right:0;top:4px;text-align:center">1,84</div></div>
<div class="a" style="left:110px;top:304px;width:80px;height:19px;border-right:1px solid #C0C0C0;border-bottom:1px solid #C0C0C0"><div class="t" style="left:0;right:0;top:4px;text-align:center">183,14</div></div>
<div class="a" style="left:0;top:323px;width:30px;height:19px;background:#D4D0C8;border-top:1px solid #fff;border-left:1px solid #fff;border-right:1px solid #404040;border-bottom:1px solid #404040"><div class="t" style="left:0;right:0;top:3px;text-align:center">18</div></div>
<div class="a" style="left:30px;top:323px;width:80px;height:19px;border-right:1px solid #C0C0C0;border-bottom:1px solid #C0C0C0"><div class="t" style="left:0;right:0;top:4px;text-align:center">0,12</div></div>
<div class="a" style="left:110px;top:323px;width:80px;height:19px;border-right:1px solid #C0C0C0;border-bottom:1px solid #C0C0C0"><div class="t" style="left:0;right:0;top:4px;text-align:center">186,18</div></div>
<div class="a" style="left:0;top:342px;width:30px;height:19px;background:#D4D0C8;border-top:1px solid #fff;border-left:1px solid #fff;border-right:1px solid #404040;border-bottom:1px solid #404040"><div class="t" style="left:0;right:0;top:3px;text-align:center">19</div></div>
<div class="a" style="left:30px;top:342px;width:80px;height:19px;border-right:1px solid #C0C0C0;border-bottom:1px solid #C0C0C0"><div class="t" style="left:0;right:0;top:4px;text-align:center">1,63</div></div>
<div class="a" style="left:110px;top:342px;width:80px;height:19px;border-right:1px solid #C0C0C0;border-bottom:1px solid #C0C0C0"><div class="t" style="left:0;right:0;top:4px;text-align:center">126,23</div></div>
<div class="a" style="left:0;top:361px;width:30px;height:19px;background:#D4D0C8;border-top:1px solid #fff;border-left:1px solid #fff;border-right:1px solid #404040;border-bottom:1px solid #404040"><div class="t" style="left:0;right:0;top:3px;text-align:center">20</div></div>
<div class="a" style="left:30px;top:361px;width:80px;height:19px;border-right:1px solid #C0C0C0;border-bottom:1px solid #C0C0C0"><div class="t" style="left:0;right:0;top:4px;text-align:center">0,11</div></div>
<div class="a" style="left:110px;top:361px;width:80px;height:19px;border-right:1px solid #C0C0C0;border-bottom:1px solid #C0C0C0"><div class="t" style="left:0;right:0;top:4px;text-align:center">97,72</div></div>
<div class="a" style="left:0;top:380px;width:30px;height:19px;background:#D4D0C8;border-top:1px solid #fff;border-left:1px solid #fff;border-right:1px solid #404040;border-bottom:1px solid #404040"><div class="t" style="left:0;right:0;top:3px;text-align:center">21</div></div>
<div class="a" style="left:30px;top:380px;width:80px;height:19px;border-right:1px solid #C0C0C0;border-bottom:1px solid #C0C0C0"><div class="t" style="left:0;right:0;top:4px;text-align:center">1,23</div></div>
<div class="a" style="left:110px;top:380px;width:80px;height:19px;border-right:1px solid #C0C0C0;border-bottom:1px solid #C0C0C0"><div class="t" style="left:0;right:0;top:4px;text-align:center">85,29</div></div>
<div class="a" style="left:0;top:399px;width:30px;height:19px;background:#D4D0C8;border-top:1px solid #fff;border-left:1px solid #fff;border-right:1px solid #404040;border-bottom:1px solid #404040"><div class="t" style="left:0;right:0;top:3px;text-align:center">22</div></div>
<div class="a" style="left:30px;top:399px;width:80px;height:19px;border-right:1px solid #C0C0C0;border-bottom:1px solid #C0C0C0"><div class="t" style="left:0;right:0;top:4px;text-align:center">0,18</div></div>
<div class="a" style="left:110px;top:399px;width:80px;height:19px;border-right:1px solid #C0C0C0;border-bottom:1px solid #C0C0C0"><div class="t" style="left:0;right:0;top:4px;text-align:center">290,65</div></div>
<div class="a" style="left:0;top:418px;width:30px;height:19px;background:#D4D0C8;border-top:1px solid #fff;border-left:1px solid #fff;border-right:1px solid #404040;border-bottom:1px solid #404040"><div class="t" style="left:0;right:0;top:3px;text-align:center">23</div></div>
<div class="a" style="left:30px;top:418px;width:80px;height:19px;border-right:1px solid #C0C0C0;border-bottom:1px solid #C0C0C0"><div class="t" style="left:0;right:0;top:4px;text-align:center">1,63</div></div>
<div class="a" style="left:110px;top:418px;width:80px;height:19px;border-right:1px solid #C0C0C0;border-bottom:1px solid #C0C0C0"><div class="t" style="left:0;right:0;top:4px;text-align:center">4,95</div></div>
<div class="a" style="left:0;top:437px;width:30px;height:19px;background:#D4D0C8;border-top:1px solid #fff;border-left:1px solid #fff;border-right:1px solid #404040;border-bottom:1px solid #404040"><div class="t" style="left:0;right:0;top:3px;text-align:center">24</div></div>
<div class="a" style="left:30px;top:437px;width:80px;height:19px;border-right:1px solid #C0C0C0;border-bottom:1px solid #C0C0C0"><div class="t" style="left:0;right:0;top:4px;text-align:center">0,09</div></div>
<div class="a" style="left:110px;top:437px;width:80px;height:19px;border-right:1px solid #C0C0C0;border-bottom:1px solid #C0C0C0"><div class="t" style="left:0;right:0;top:4px;text-align:center">7,86</div></div>
<div class="a" style="left:0;top:456px;width:30px;height:19px;background:#D4D0C8;border-top:1px solid #fff;border-left:1px solid #fff;border-right:1px solid #404040;border-bottom:1px solid #404040"><div class="t" style="left:0;right:0;top:3px;text-align:center">25</div></div>
<div class="a" style="left:30px;top:456px;width:80px;height:19px;border-right:1px solid #C0C0C0;border-bottom:1px solid #C0C0C0"><div class="t" style="left:0;right:0;top:4px;text-align:center">1,91</div></div>
<div class="a" style="left:110px;top:456px;width:80px;height:19px;border-right:1px solid #C0C0C0;border-bottom:1px solid #C0C0C0"><div class="t" style="left:0;right:0;top:4px;text-align:center">276,05</div></div>
<div class="a" style="left:0;top:475px;width:30px;height:19px;background:#D4D0C8;border-top:1px solid #fff;border-left:1px solid #fff;border-right:1px solid #404040;border-bottom:1px solid #404040"><div class="t" style="left:0;right:0;top:3px;text-align:center"></div></div>
<div class="a" style="left:30px;top:475px;width:80px;height:19px;border-right:1px solid #C0C0C0"></div><div class="a" style="left:110px;top:475px;width:80px;height:19px;border-right:1px solid #C0C0C0"></div>
</div>
<div class="a " style="left:408px;top:251px;width:16px;height:449px;background:repeating-conic-gradient(#fff 0 25%,#D4D0C8 0 50%) 0 0/2px 2px"></div>
<div class="a rais" style="left:408px;top:236px;width:16px;height:15px;"><div class="a" style="left:4px;top:5px;width:0;height:0;border-left:3.5px solid transparent;border-right:3.5px solid transparent;border-bottom:4px solid #000"></div></div>
<div class="a rais" style="left:408px;top:251px;width:16px;height:362px;"></div>
<div class="a rais" style="left:408px;top:700px;width:16px;height:15px;"><div class="a" style="left:4px;top:5px;width:0;height:0;border-left:3.5px solid transparent;border-right:3.5px solid transparent;border-top:4px solid #000"></div></div>
<div class="a rais" style="left:213px;top:721px;width:70px;height:22px;"><div class="t" style="left:0;right:0;top:5px;text-align:center">Wyczyść</div></div>
<div class="t " style="left:332px;top:727px;">Kopiuj z:</div>
<div class="a sunk" style="left:381px;top:721px;width:42px;height:22px;background:#fff"></div>
<div class="a rais" style="left:405px;top:724px;width:16px;height:16px;"><div class="a" style="left:4px;top:7px;width:0;height:0;border-left:3.5px solid transparent;border-right:3.5px solid transparent;border-top:4px solid #000"></div></div>
<div class="rad" style="left:445px;top:727px"><div class="a" style="left:3px;top:3px;width:4px;height:4px;border-radius:50%;background:#000"></div></div>
<div class="t " style="left:461.5px;top:727px;">Oscyloskop</div>
<div class="rad" style="left:535px;top:727px"></div>
<div class="t " style="left:551.5px;top:727px;">Harmoniczne</div>
<div class="t " style="left:979px;top:720px;letter-spacing:0.2px">CF =&nbsp; 1.72</div>
<div class="t " style="left:980px;top:732px;letter-spacing:0.2px">SF =&nbsp; 1.17</div>
<div class="t " style="left:1064px;top:720px;letter-spacing:0.1px">THD =&nbsp; 33.94 %</div>
<div class="t " style="left:1065px;top:732px;letter-spacing:0.1px">TDF =&nbsp; 30.43 %</div>
<div class="a " style="left:444px;top:235px;width:693px;height:480px;background:#A9A7A3"></div>
<div class="a " style="left:489px;top:250px;width:635px;height:435px;background:#FFFFE9;border:1px solid #000"></div>
<svg class="a" style="left:0;top:0" width="1152" height="864" viewBox="0 0 1152 864">
<defs><clipPath id="pc"><rect x="490" y="251" width="633" height="433"/></clipPath></defs>
<line x1="491" y1="260.5" x2="1123" y2="260.5" stroke="#000" stroke-width="1" stroke-dasharray="1 3"/><line x1="491" y1="467.5" x2="1123" y2="467.5" stroke="#000" stroke-width="1" stroke-dasharray="1 3"/><line x1="491" y1="674.5" x2="1123" y2="674.5" stroke="#000" stroke-width="1" stroke-dasharray="1 3"/><line x1="647.5" y1="252" x2="647.5" y2="684" stroke="#000" stroke-width="1" stroke-dasharray="1 3"/><line x1="806.5" y1="252" x2="806.5" y2="684" stroke="#000" stroke-width="1" stroke-dasharray="1 3"/><line x1="964.5" y1="252" x2="964.5" y2="684" stroke="#000" stroke-width="1" stroke-dasharray="1 3"/>
<polyline clip-path="url(#pc)" points="489.50,438.02 489.85,438.21 490.20,438.32 490.56,438.36 490.91,438.31 491.26,438.20 491.61,438.01 491.97,437.75 492.32,437.43 492.67,437.04 493.02,436.59 493.37,436.09 493.73,435.54 494.08,434.95 494.43,434.33 494.78,433.67 495.14,432.99 495.49,432.29 495.84,431.59 496.19,430.88 496.54,430.18 496.90,429.49 497.25,428.82 497.60,428.18 497.95,427.56 498.31,426.99 498.66,426.45 499.01,425.96 499.36,425.52 499.71,425.14 500.07,424.82 500.42,424.55 500.77,424.35 501.12,424.21 501.48,424.13 501.83,424.11 502.18,424.15 502.53,424.25 502.88,424.41 503.24,424.62 503.59,424.87 503.94,425.17 504.29,425.51 504.65,425.88 505.00,426.28 505.35,426.70 505.70,427.13 506.05,427.57 506.41,428.01 506.76,428.44 507.11,428.86 507.46,429.26 507.82,429.62 508.17,429.95 508.52,430.24 508.87,430.49 509.22,430.68 509.58,430.81 509.93,430.89 510.28,430.89 510.63,430.83 510.99,430.70 511.34,430.50 511.69,430.23 512.04,429.89 512.39,429.48 512.75,429.00 513.10,428.45 513.45,427.84 513.80,427.18 514.16,426.47 514.51,425.71 514.86,424.91 515.21,424.08 515.56,423.23 515.92,422.36 516.27,421.49 516.62,420.63 516.97,419.77 517.33,418.94 517.68,418.14 518.03,417.39 518.38,416.69 518.73,416.05 519.09,415.48 519.44,414.99 519.79,414.59 520.14,414.29 520.50,414.09 520.85,414.01 521.20,414.04 521.55,414.19 521.90,414.47 522.26,414.88 522.61,415.42 522.96,416.09 523.31,416.90 523.67,417.84 524.02,418.91 524.37,420.10 524.72,421.43 525.07,422.87 525.43,424.42 525.78,426.08 526.13,427.84 526.48,429.69 526.84,431.62 527.19,433.63 527.54,435.69 527.89,437.80 528.24,439.94 528.60,442.12 528.95,444.30 529.30,446.48 529.65,448.66 530.01,450.80 530.36,452.91 530.71,454.97 531.06,456.96 531.41,458.88 531.77,460.72 532.12,462.45 532.47,464.09 532.82,465.60 533.18,466.99 533.53,468.25 533.88,469.37 534.23,470.34 534.58,471.17 534.94,471.83 535.29,472.34 535.64,472.70 535.99,472.89 536.35,472.92 536.70,472.79 537.05,472.50 537.40,472.05 537.75,471.46 538.11,470.72 538.46,469.84 538.81,468.82 539.16,467.68 539.52,466.42 539.87,465.04 540.22,463.57 540.57,461.99 540.92,460.34 541.28,458.60 541.63,456.81 541.98,454.96 542.33,453.06 542.69,451.13 543.04,449.17 543.39,447.19 543.74,445.21 544.09,443.24 544.45,441.27 544.80,439.32 545.15,437.39 545.50,435.50 545.86,433.65 546.21,431.85 546.56,430.09 546.91,428.39 547.26,426.75 547.62,425.17 547.97,423.66 548.32,422.21 548.67,420.83 549.03,419.51 549.38,418.27 549.73,417.09 550.08,415.97 550.43,414.92 550.79,413.93 551.14,413.00 551.49,412.13 551.84,411.31 552.20,410.53 552.55,409.80 552.90,409.11 553.25,408.46 553.60,407.84 553.96,407.25 554.31,406.68 554.66,406.12 555.01,405.59 555.37,405.06 555.72,404.54 556.07,404.02 556.42,403.50 556.77,402.98 557.13,402.45 557.48,401.92 557.83,401.37 558.18,400.81 558.54,400.23 558.89,399.64 559.24,399.03 559.59,398.41 559.94,397.76 560.30,397.10 560.65,396.43 561.00,395.73 561.35,395.02 561.71,394.30 562.06,393.56 562.41,392.81 562.76,392.05 563.11,391.29 563.47,390.51 563.82,389.73 564.17,388.95 564.52,388.17 564.88,387.39 565.23,386.62 565.58,385.85 565.93,385.08 566.28,384.32 566.64,383.58 566.99,382.84 567.34,382.12 567.69,381.41 568.05,380.71 568.40,380.03 568.75,379.37 569.10,378.72 569.45,378.08 569.81,377.47 570.16,376.87 570.51,376.28 570.86,375.71 571.22,375.15 571.57,374.61 571.92,374.08 572.27,373.56 572.62,373.06 572.98,372.56 573.33,372.08 573.68,371.60 574.03,371.13 574.39,370.66 574.74,370.21 575.09,369.76 575.44,369.31 575.79,368.86 576.15,368.42 576.50,367.98 576.85,367.55 577.20,367.11 577.56,366.68 577.91,366.25 578.26,365.82 578.61,365.39 578.96,364.96 579.32,364.54 579.67,364.12 580.02,363.71 580.37,363.30 580.73,362.89 581.08,362.49 581.43,362.10 581.78,361.71 582.13,361.34 582.49,360.97 582.84,360.61 583.19,360.26 583.54,359.92 583.90,359.60 584.25,359.28 584.60,358.98 584.95,358.69 585.30,358.41 585.66,358.15 586.01,357.89 586.36,357.65 586.71,357.42 587.07,357.20 587.42,356.99 587.77,356.78 588.12,356.59 588.47,356.40 588.83,356.21 589.18,356.03 589.53,355.85 589.88,355.67 590.24,355.49 590.59,355.31 590.94,355.12 591.29,354.92 591.64,354.72 592.00,354.50 592.35,354.27 592.70,354.03 593.05,353.77 593.41,353.49 593.76,353.19 594.11,352.88 594.46,352.54 594.81,352.18 595.17,351.79 595.52,351.39 595.87,350.95 596.22,350.50 596.58,350.02 596.93,349.51 597.28,348.98 597.63,348.43 597.98,347.86 598.34,347.26 598.69,346.65 599.04,346.01 599.39,345.36 599.75,344.70 600.10,344.02 600.45,343.33 600.80,342.64 601.15,341.93 601.51,341.23 601.86,340.52 602.21,339.81 602.56,339.11 602.92,338.41 603.27,337.73 603.62,337.05 603.97,336.39 604.32,335.75 604.68,335.12 605.03,334.51 605.38,333.93 605.73,333.37 606.09,332.83 606.44,332.32 606.79,331.84 607.14,331.39 607.49,330.97 607.85,330.57 608.20,330.21 608.55,329.88 608.90,329.58 609.26,329.30 609.61,329.06 609.96,328.84 610.31,328.65 610.66,328.49 611.02,328.35 611.37,328.23 611.72,328.14 612.07,328.06 612.43,328.00 612.78,327.96 613.13,327.93 613.48,327.90 613.83,327.89 614.19,327.89 614.54,327.89 614.89,327.89 615.24,327.89 615.60,327.89 615.95,327.88 616.30,327.88 616.65,327.86 617.00,327.83 617.36,327.80 617.71,327.75 618.06,327.69 618.41,327.62 618.77,327.53 619.12,327.43 619.47,327.32 619.82,327.18 620.17,327.04 620.53,326.87 620.88,326.69 621.23,326.50 621.58,326.29 621.94,326.07 622.29,325.83 622.64,325.59 622.99,325.33 623.34,325.06 623.70,324.78 624.05,324.49 624.40,324.19 624.75,323.89 625.11,323.58 625.46,323.27 625.81,322.95 626.16,322.63 626.51,322.31 626.87,321.99 627.22,321.67 627.57,321.35 627.92,321.04 628.28,320.72 628.63,320.40 628.98,320.09 629.33,319.78 629.68,319.47 630.04,319.17 630.39,318.86 630.74,318.56 631.09,318.26 631.45,317.96 631.80,317.66 632.15,317.36 632.50,317.05 632.85,316.75 633.21,316.44 633.56,316.12 633.91,315.80 634.26,315.47 634.62,315.14 634.97,314.79 635.32,314.44 635.67,314.07 636.02,313.70 636.38,313.31 636.73,312.90 637.08,312.48 637.43,312.05 637.79,311.60 638.14,311.13 638.49,310.64 638.84,310.13 639.19,309.61 639.55,309.07 639.90,308.51 640.25,307.93 640.60,307.33 640.96,306.71 641.31,306.07 641.66,305.41 642.01,304.73 642.36,304.04 642.72,303.33 643.07,302.60 643.42,301.85 643.77,301.09 644.13,300.31 644.48,299.52 644.83,298.71 645.18,297.89 645.53,297.06 645.89,296.22 646.24,295.37 646.59,294.51 646.94,293.64 647.30,292.76 647.65,291.87 648.00,290.98 648.35,290.09 648.70,289.19 649.06,288.29 649.41,287.38 649.76,286.48 650.11,285.57 650.47,284.67 650.82,283.77 651.17,282.87 651.52,281.97 651.87,281.08 652.23,280.19 652.58,279.32 652.93,278.45 653.28,277.59 653.64,276.74 653.99,275.90 654.34,275.07 654.69,274.26 655.04,273.47 655.40,272.69 655.75,271.93 656.10,271.19 656.45,270.47 656.81,269.77 657.16,269.10 657.51,268.45 657.86,267.83 658.21,267.24 658.57,266.68 658.92,266.15 659.27,265.66 659.62,265.20 659.98,264.77 660.33,264.38 660.68,264.03 661.03,263.72 661.38,263.45 661.74,263.22 662.09,263.03 662.44,262.89 662.79,262.79 663.15,262.73 663.50,262.72 663.85,262.75 664.20,262.83 664.55,262.95 664.91,263.11 665.26,263.31 665.61,263.56 665.96,263.85 666.32,264.18 666.67,264.55 667.02,264.95 667.37,265.39 667.72,265.86 668.08,266.37 668.43,266.90 668.78,267.46 669.13,268.05 669.49,268.66 669.84,269.29 670.19,269.94 670.54,270.60 670.89,271.28 671.25,271.96 671.60,272.66 671.95,273.36 672.30,274.06 672.66,274.76 673.01,275.47 673.36,276.17 673.71,276.86 674.06,277.54 674.42,278.22 674.77,278.89 675.12,279.54 675.47,280.19 675.83,280.82 676.18,281.43 676.53,282.04 676.88,282.62 677.23,283.19 677.59,283.75 677.94,284.30 678.29,284.83 678.64,285.35 679.00,285.85 679.35,286.35 679.70,286.84 680.05,287.31 680.40,287.79 680.76,288.25 681.11,288.72 681.46,289.18 681.81,289.65 682.17,290.11 682.52,290.58 682.87,291.06 683.22,291.54 683.57,292.03 683.93,292.52 684.28,293.03 684.63,293.56 684.98,294.09 685.34,294.64 685.69,295.20 686.04,295.78 686.39,296.37 686.74,296.97 687.10,297.59 687.45,298.22 687.80,298.86 688.15,299.52 688.51,300.18 688.86,300.86 689.21,301.53 689.56,302.22 689.91,302.90 690.27,303.58 690.62,304.26 690.97,304.94 691.32,305.60 691.68,306.26 692.03,306.90 692.38,307.52 692.73,308.12 693.08,308.70 693.44,309.25 693.79,309.77 694.14,310.26 694.49,310.72 694.85,311.13 695.20,311.51 695.55,311.84 695.90,312.13 696.25,312.37 696.61,312.57 696.96,312.71 697.31,312.81 697.66,312.85 698.02,312.84 698.37,312.79 698.72,312.68 699.07,312.52 699.42,312.31 699.78,312.05 700.13,311.74 700.48,311.39 700.83,310.99 701.19,310.56 701.54,310.08 701.89,309.57 702.24,309.03 702.59,308.45 702.95,307.85 703.30,307.23 703.65,306.58 704.00,305.92 704.36,305.25 704.71,304.56 705.06,303.88 705.41,303.19 705.76,302.50 706.12,301.81 706.47,301.14 706.82,300.48 707.17,299.83 707.53,299.20 707.88,298.59 708.23,298.00 708.58,297.44 708.93,296.90 709.29,296.39 709.64,295.92 709.99,295.47 710.34,295.06 710.70,294.68 711.05,294.34 711.40,294.03 711.75,293.75 712.10,293.51 712.46,293.30 712.81,293.13 713.16,292.98 713.51,292.87 713.87,292.79 714.22,292.73 714.57,292.70 714.92,292.70 715.27,292.72 715.63,292.77 715.98,292.83 716.33,292.91 716.68,293.01 717.04,293.13 717.39,293.26 717.74,293.40 718.09,293.56 718.44,293.72 718.80,293.90 719.15,294.08 719.50,294.27 719.85,294.47 720.21,294.68 720.56,294.89 720.91,295.11 721.26,295.33 721.61,295.57 721.97,295.81 722.32,296.06 722.67,296.33 723.02,296.60 723.38,296.89 723.73,297.19 724.08,297.51 724.43,297.85 724.78,298.20 725.14,298.58 725.49,298.99 725.84,299.42 726.19,299.88 726.55,300.37 726.90,300.89 727.25,301.45 727.60,302.05 727.95,302.69 728.31,303.37 728.66,304.09 729.01,304.86 729.36,305.68 729.72,306.54 730.07,307.46 730.42,308.43 730.77,309.45 731.12,310.52 731.48,311.65 731.83,312.83 732.18,314.07 732.53,315.36 732.89,316.71 733.24,318.10 733.59,319.55 733.94,321.06 734.29,322.61 734.65,324.21 735.00,325.86 735.35,327.55 735.70,329.29 736.06,331.07 736.41,332.89 736.76,334.74 737.11,336.63 737.46,338.55 737.82,340.49 738.17,342.46 738.52,344.46 738.87,346.47 739.23,348.51 739.58,350.55 739.93,352.61 740.28,354.67 740.63,356.74 740.99,358.81 741.34,360.87 741.69,362.94 742.04,365.00 742.40,367.05 742.75,369.08 743.10,371.11 743.45,373.12 743.80,375.11 744.16,377.08 744.51,379.03 744.86,380.95 745.21,382.86 745.57,384.73 745.92,386.59 746.27,388.41 746.62,390.20 746.97,391.97 747.33,393.71 747.68,395.42 748.03,397.10 748.38,398.75 748.74,400.37 749.09,401.97 749.44,403.53 749.79,405.07 750.14,406.59 750.50,408.08 750.85,409.54 751.20,410.98 751.55,412.40 751.91,413.80 752.26,415.18 752.61,416.54 752.96,417.89 753.31,419.22 753.67,420.53 754.02,421.84 754.37,423.13 754.72,424.42 755.08,425.70 755.43,426.97 755.78,428.24 756.13,429.51 756.48,430.78 756.84,432.04 757.19,433.31 757.54,434.58 757.89,435.85 758.25,437.12 758.60,438.41 758.95,439.69 759.30,440.98 759.65,442.28 760.01,443.59 760.36,444.90 760.71,446.22 761.06,447.54 761.42,448.87 761.77,450.21 762.12,451.55 762.47,452.89 762.82,454.24 763.18,455.59 763.53,456.94 763.88,458.29 764.23,459.63 764.59,460.98 764.94,462.31 765.29,463.64 765.64,464.96 765.99,466.26 766.35,467.56 766.70,468.83 767.05,470.09 767.40,471.33 767.76,472.54 768.11,473.73 768.46,474.89 768.81,476.03 769.16,477.13 769.52,478.20 769.87,479.24 770.22,480.24 770.57,481.20 770.93,482.13 771.28,483.01 771.63,483.86 771.98,484.66 772.33,485.42 772.69,486.15 773.04,486.83 773.39,487.47 773.74,488.07 774.10,488.63 774.45,489.16 774.80,489.64 775.15,490.10 775.50,490.52 775.86,490.91 776.21,491.27 776.56,491.61 776.91,491.93 777.27,492.23 777.62,492.51 777.97,492.78 778.32,493.04 778.67,493.29 779.03,493.54 779.38,493.80 779.73,494.05 780.08,494.32 780.44,494.59 780.79,494.89 781.14,495.19 781.49,495.52 781.84,495.87 782.20,496.25 782.55,496.65 782.90,497.09 783.25,497.55 783.61,498.04 783.96,498.57 784.31,499.13 784.66,499.72 785.01,500.34 785.37,501.00 785.72,501.68 786.07,502.39 786.42,503.13 786.78,503.90 787.13,504.68 787.48,505.48 787.83,506.29 788.18,507.12 788.54,507.94 788.89,508.78 789.24,509.60 789.59,510.42 789.95,511.23 790.30,512.02 790.65,512.79 791.00,513.52 791.35,514.23 791.71,514.90 792.06,515.52 792.41,516.10 792.76,516.63 793.12,517.10 793.47,517.52 793.82,517.87 794.17,518.16 794.52,518.38 794.88,518.53 795.23,518.61 795.58,518.62 795.93,518.55 796.29,518.42 796.64,518.21 796.99,517.94 797.34,517.59 797.69,517.19 798.05,516.71 798.40,516.18 798.75,515.60 799.10,514.96 799.46,514.28 799.81,513.56 800.16,512.80 800.51,512.01 800.86,511.20 801.22,510.37 801.57,509.54 801.92,508.70 802.27,507.86 802.63,507.03 802.98,506.22 803.33,505.44 803.68,504.68 804.03,503.95 804.39,503.27 804.74,502.63 805.09,502.04 805.44,501.51 805.80,501.04 806.15,500.63 806.50,500.28 806.85,500.00 807.20,499.79 807.56,499.65 807.91,499.58 808.26,499.57 808.61,499.64 808.97,499.77 809.32,499.97 809.67,500.22 810.02,500.54 810.37,500.91 810.73,501.33 811.08,501.79 811.43,502.29 811.78,502.83 812.14,503.40 812.49,503.98 812.84,504.59 813.19,505.20 813.54,505.82 813.90,506.43 814.25,507.04 814.60,507.63 814.95,508.19 815.31,508.74 815.66,509.25 816.01,509.72 816.36,510.15 816.71,510.54 817.07,510.89 817.42,511.18 817.77,511.42 818.12,511.60 818.48,511.74 818.83,511.82 819.18,511.84 819.53,511.81 819.88,511.74 820.24,511.61 820.59,511.44 820.94,511.23 821.29,510.98 821.65,510.69 822.00,510.38 822.35,510.05 822.70,509.70 823.05,509.34 823.41,508.97 823.76,508.61 824.11,508.25 824.46,507.91 824.82,507.59 825.17,507.29 825.52,507.02 825.87,506.79 826.22,506.60 826.58,506.46 826.93,506.37 827.28,506.33 827.63,506.35 827.99,506.42 828.34,506.55 828.69,506.75 829.04,507.00 829.39,507.32 829.75,507.69 830.10,508.12 830.45,508.60 830.80,509.13 831.16,509.71 831.51,510.32 831.86,510.97 832.21,511.64 832.56,512.34 832.92,513.05 833.27,513.76 833.62,514.47 833.97,515.17 834.33,515.85 834.68,516.50 835.03,517.11 835.38,517.68 835.73,518.20 836.09,518.65 836.44,519.02 836.79,519.32 837.14,519.54 837.50,519.66 837.85,519.68 838.20,519.60 838.55,519.41 838.90,519.10 839.26,518.68 839.61,518.14 839.96,517.48 840.31,516.70 840.67,515.80 841.02,514.77 841.37,513.64 841.72,512.38 842.07,511.02 842.43,509.56 842.78,507.99 843.13,506.34 843.48,504.60 843.84,502.78 844.19,500.89 844.54,498.95 844.89,496.96 845.24,494.93 845.60,492.88 845.95,490.81 846.30,488.73 846.65,486.66 847.01,484.62 847.36,482.60 847.71,480.62 848.06,478.70 848.41,476.84 848.77,475.05 849.12,473.35 849.47,471.74 849.82,470.23 850.18,468.84 850.53,467.56 850.88,466.41 851.23,465.39 851.58,464.51 851.94,463.77 852.29,463.17 852.64,462.72 852.99,462.42 853.35,462.27 853.70,462.26 854.05,462.41 854.40,462.70 854.75,463.14 855.11,463.72 855.46,464.44 855.81,465.28 856.16,466.26 856.52,467.35 856.87,468.56 857.22,469.87 857.57,471.28 857.92,472.78 858.28,474.36 858.63,476.02 858.98,477.74 859.33,479.52 859.69,481.34 860.04,483.21 860.39,485.10 860.74,487.01 861.09,488.94 861.45,490.87 861.80,492.80 862.15,494.72 862.50,496.62 862.86,498.50 863.21,500.34 863.56,502.16 863.91,503.93 864.26,505.66 864.62,507.34 864.97,508.96 865.32,510.54 865.67,512.05 866.03,513.51 866.38,514.91 866.73,516.25 867.08,517.53 867.43,518.74 867.79,519.90 868.14,521.01 868.49,522.05 868.84,523.05 869.20,523.99 869.55,524.88 869.90,525.73 870.25,526.54 870.60,527.30 870.96,528.03 871.31,528.73 871.66,529.40 872.01,530.05 872.37,530.67 872.72,531.28 873.07,531.87 873.42,532.45 873.77,533.02 874.13,533.59 874.48,534.15 874.83,534.72 875.18,535.29 875.54,535.86 875.89,536.44 876.24,537.03 876.59,537.63 876.94,538.25 877.30,538.87 877.65,539.51 878.00,540.16 878.35,540.83 878.71,541.51 879.06,542.21 879.41,542.91 879.76,543.64 880.11,544.37 880.47,545.12 880.82,545.87 881.17,546.63 881.52,547.41 881.88,548.19 882.23,548.97 882.58,549.75 882.93,550.54 883.28,551.33 883.64,552.12 883.99,552.90 884.34,553.68 884.69,554.46 885.05,555.22 885.40,555.98 885.75,556.73 886.10,557.46 886.45,558.19 886.81,558.90 887.16,559.59 887.51,560.27 887.86,560.94 888.22,561.58 888.57,562.21 888.92,562.82 889.27,563.41 889.62,563.99 889.98,564.54 890.33,565.08 890.68,565.59 891.03,566.09 891.39,566.57 891.74,567.03 892.09,567.47 892.44,567.89 892.79,568.30 893.15,568.68 893.50,569.05 893.85,569.40 894.20,569.74 894.56,570.06 894.91,570.37 895.26,570.66 895.61,570.94 895.96,571.20 896.32,571.45 896.67,571.69 897.02,571.91 897.37,572.13 897.73,572.33 898.08,572.53 898.43,572.71 898.78,572.89 899.13,573.06 899.49,573.22 899.84,573.38 900.19,573.53 900.54,573.67 900.90,573.81 901.25,573.95 901.60,574.09 901.95,574.22 902.30,574.35 902.66,574.49 903.01,574.62 903.36,574.75 903.71,574.89 904.07,575.04 904.42,575.18 904.77,575.34 905.12,575.50 905.47,575.67 905.83,575.85 906.18,576.04 906.53,576.24 906.88,576.45 907.24,576.68 907.59,576.92 907.94,577.17 908.29,577.45 908.64,577.74 909.00,578.05 909.35,578.37 909.70,578.72 910.05,579.09 910.41,579.48 910.76,579.89 911.11,580.32 911.46,580.77 911.81,581.24 912.17,581.74 912.52,582.26 912.87,582.80 913.22,583.35 913.58,583.93 913.93,584.53 914.28,585.15 914.63,585.79 914.98,586.44 915.34,587.10 915.69,587.78 916.04,588.48 916.39,589.18 916.75,589.89 917.10,590.61 917.45,591.34 917.80,592.06 918.15,592.79 918.51,593.52 918.86,594.24 919.21,594.96 919.56,595.67 919.92,596.37 920.27,597.06 920.62,597.74 920.97,598.40 921.32,599.04 921.68,599.66 922.03,600.26 922.38,600.84 922.73,601.40 923.09,601.92 923.44,602.42 923.79,602.89 924.14,603.33 924.49,603.75 924.85,604.13 925.20,604.48 925.55,604.80 925.90,605.09 926.26,605.35 926.61,605.58 926.96,605.78 927.31,605.95 927.66,606.10 928.02,606.21 928.37,606.31 928.72,606.38 929.07,606.44 929.43,606.47 929.78,606.48 930.13,606.49 930.48,606.48 930.83,606.45 931.19,606.43 931.54,606.39 931.89,606.36 932.24,606.32 932.60,606.28 932.95,606.25 933.30,606.23 933.65,606.21 934.00,606.21 934.36,606.21 934.71,606.24 935.06,606.28 935.41,606.33 935.77,606.41 936.12,606.50 936.47,606.62 936.82,606.76 937.17,606.92 937.53,607.11 937.88,607.32 938.23,607.55 938.58,607.80 938.94,608.08 939.29,608.38 939.64,608.70 939.99,609.04 940.34,609.40 940.70,609.78 941.05,610.17 941.40,610.58 941.75,611.00 942.11,611.44 942.46,611.88 942.81,612.33 943.16,612.79 943.51,613.25 943.87,613.72 944.22,614.18 944.57,614.64 944.92,615.10 945.28,615.56 945.63,616.01 945.98,616.46 946.33,616.89 946.68,617.32 947.04,617.73 947.39,618.14 947.74,618.53 948.09,618.91 948.45,619.28 948.80,619.63 949.15,619.97 949.50,620.30 949.85,620.62 950.21,620.93 950.56,621.23 950.91,621.52 951.26,621.80 951.62,622.07 951.97,622.34 952.32,622.61 952.67,622.87 953.02,623.14 953.38,623.40 953.73,623.67 954.08,623.94 954.43,624.22 954.79,624.51 955.14,624.81 955.49,625.13 955.84,625.45 956.19,625.80 956.55,626.16 956.90,626.54 957.25,626.94 957.60,627.36 957.96,627.81 958.31,628.28 958.66,628.77 959.01,629.29 959.36,629.84 959.72,630.42 960.07,631.02 960.42,631.65 960.77,632.31 961.13,632.99 961.48,633.70 961.83,634.44 962.18,635.20 962.53,635.99 962.89,636.81 963.24,637.64 963.59,638.50 963.94,639.38 964.30,640.28 964.65,641.19 965.00,642.13 965.35,643.07 965.70,644.03 966.06,645.01 966.41,645.99 966.76,646.98 967.11,647.97 967.47,648.97 967.82,649.97 968.17,650.97 968.52,651.97 968.87,652.97 969.23,653.96 969.58,654.94 969.93,655.91 970.28,656.87 970.64,657.82 970.99,658.75 971.34,659.67 971.69,660.57 972.04,661.45 972.40,662.30 972.75,663.14 973.10,663.94 973.45,664.72 973.81,665.47 974.16,666.19 974.51,666.88 974.86,667.54 975.21,668.16 975.57,668.75 975.92,669.30 976.27,669.81 976.62,670.28 976.98,670.72 977.33,671.11 977.68,671.46 978.03,671.76 978.38,672.03 978.74,672.24 979.09,672.42 979.44,672.55 979.79,672.63 980.15,672.67 980.50,672.67 980.85,672.62 981.20,672.53 981.55,672.39 981.91,672.21 982.26,671.99 982.61,671.73 982.96,671.42 983.32,671.08 983.67,670.70 984.02,670.29 984.37,669.84 984.72,669.36 985.08,668.85 985.43,668.31 985.78,667.75 986.13,667.16 986.49,666.55 986.84,665.92 987.19,665.28 987.54,664.62 987.89,663.95 988.25,663.26 988.60,662.58 988.95,661.89 989.30,661.19 989.66,660.50 990.01,659.81 990.36,659.12 990.71,658.44 991.06,657.76 991.42,657.10 991.77,656.44 992.12,655.80 992.47,655.16 992.83,654.55 993.18,653.94 993.53,653.35 993.88,652.77 994.23,652.21 994.59,651.66 994.94,651.12 995.29,650.59 995.64,650.08 996.00,649.57 996.35,649.08 996.70,648.59 997.05,648.10 997.40,647.62 997.76,647.15 998.11,646.67 998.46,646.19 998.81,645.71 999.17,645.22 999.52,644.73 999.87,644.23 1000.22,643.72 1000.57,643.19 1000.93,642.65 1001.28,642.10 1001.63,641.54 1001.98,640.95 1002.34,640.35 1002.69,639.74 1003.04,639.11 1003.39,638.46 1003.74,637.79 1004.10,637.11 1004.45,636.41 1004.80,635.70 1005.15,634.98 1005.51,634.25 1005.86,633.51 1006.21,632.76 1006.56,632.02 1006.91,631.27 1007.27,630.52 1007.62,629.79 1007.97,629.06 1008.32,628.34 1008.68,627.64 1009.03,626.96 1009.38,626.30 1009.73,625.66 1010.08,625.06 1010.44,624.49 1010.79,623.96 1011.14,623.47 1011.49,623.02 1011.85,622.61 1012.20,622.26 1012.55,621.95 1012.90,621.70 1013.25,621.49 1013.61,621.35 1013.96,621.26 1014.31,621.22 1014.66,621.24 1015.02,621.32 1015.37,621.45 1015.72,621.64 1016.07,621.89 1016.42,622.18 1016.78,622.53 1017.13,622.92 1017.48,623.36 1017.83,623.84 1018.19,624.36 1018.54,624.92 1018.89,625.51 1019.24,626.12 1019.59,626.77 1019.95,627.43 1020.30,628.11 1020.65,628.81 1021.00,629.51 1021.36,630.22 1021.71,630.92 1022.06,631.63 1022.41,632.33 1022.76,633.01 1023.12,633.69 1023.47,634.34 1023.82,634.98 1024.17,635.60 1024.53,636.18 1024.88,636.75 1025.23,637.28 1025.58,637.78 1025.93,638.25 1026.29,638.69 1026.64,639.09 1026.99,639.46 1027.34,639.80 1027.70,640.11 1028.05,640.38 1028.40,640.62 1028.75,640.83 1029.10,641.01 1029.46,641.17 1029.81,641.30 1030.16,641.40 1030.51,641.48 1030.87,641.54 1031.22,641.59 1031.57,641.61 1031.92,641.62 1032.27,641.62 1032.63,641.61 1032.98,641.58 1033.33,641.55 1033.68,641.52 1034.04,641.47 1034.39,641.42 1034.74,641.37 1035.09,641.32 1035.44,641.26 1035.80,641.20 1036.15,641.13 1036.50,641.06 1036.85,640.99 1037.21,640.90 1037.56,640.82 1037.91,640.72 1038.26,640.61 1038.61,640.49 1038.97,640.35 1039.32,640.19 1039.67,640.02 1040.02,639.82 1040.38,639.60 1040.73,639.35 1041.08,639.07 1041.43,638.75 1041.78,638.40 1042.14,638.01 1042.49,637.58 1042.84,637.10 1043.19,636.58 1043.55,636.00 1043.90,635.38 1044.25,634.71 1044.60,633.98 1044.95,633.19 1045.31,632.35 1045.66,631.45 1046.01,630.49 1046.36,629.47 1046.72,628.40 1047.07,627.27 1047.42,626.08 1047.77,624.83 1048.12,623.53 1048.48,622.17 1048.83,620.76 1049.18,619.30 1049.53,617.80 1049.89,616.24 1050.24,614.65 1050.59,613.01 1050.94,611.33 1051.29,609.62 1051.65,607.87 1052.00,606.10 1052.35,604.30 1052.70,602.48 1053.06,600.63 1053.41,598.77 1053.76,596.89 1054.11,595.01 1054.46,593.11 1054.82,591.21 1055.17,589.30 1055.52,587.39 1055.87,585.49 1056.23,583.58 1056.58,581.68 1056.93,579.79 1057.28,577.91 1057.63,576.03 1057.99,574.17 1058.34,572.31 1058.69,570.47 1059.04,568.65 1059.40,566.83 1059.75,565.03 1060.10,563.25 1060.45,561.47 1060.80,559.71 1061.16,557.97 1061.51,556.24 1061.86,554.52 1062.21,552.82 1062.57,551.13 1062.92,549.45 1063.27,547.78 1063.62,546.12 1063.97,544.48 1064.33,542.84 1064.68,541.21 1065.03,539.59 1065.38,537.99 1065.74,536.39 1066.09,534.79 1066.44,533.21 1066.79,531.63 1067.14,530.06 1067.50,528.50 1067.85,526.94 1068.20,525.40 1068.55,523.86 1068.91,522.32 1069.26,520.80 1069.61,519.28 1069.96,517.77 1070.31,516.26 1070.67,514.77 1071.02,513.28 1071.37,511.80 1071.72,510.33 1072.08,508.86 1072.43,507.41 1072.78,505.96 1073.13,504.52 1073.48,503.09 1073.84,501.67 1074.19,500.26 1074.54,498.85 1074.89,497.46 1075.25,496.07 1075.60,494.69 1075.95,493.32 1076.30,491.95 1076.65,490.59 1077.01,489.24 1077.36,487.90 1077.71,486.56 1078.06,485.23 1078.42,483.91 1078.77,482.60 1079.12,481.29 1079.47,479.98 1079.82,478.69 1080.18,477.40 1080.53,476.12 1080.88,474.85 1081.23,473.59 1081.59,472.34 1081.94,471.10 1082.29,469.87 1082.64,468.65 1082.99,467.44 1083.35,466.25 1083.70,465.08 1084.05,463.92 1084.40,462.78 1084.76,461.66 1085.11,460.56 1085.46,459.49 1085.81,458.44 1086.16,457.41 1086.52,456.42 1086.87,455.45 1087.22,454.51 1087.57,453.60 1087.93,452.72 1088.28,451.88 1088.63,451.07 1088.98,450.30 1089.33,449.56 1089.69,448.86 1090.04,448.19 1090.39,447.56 1090.74,446.97 1091.10,446.41 1091.45,445.88 1091.80,445.38 1092.15,444.92 1092.50,444.49 1092.86,444.08 1093.21,443.70 1093.56,443.35 1093.91,443.02 1094.27,442.70 1094.62,442.40 1094.97,442.11 1095.32,441.84 1095.67,441.56 1096.03,441.30 1096.38,441.03 1096.73,440.76 1097.08,440.48 1097.44,440.19 1097.79,439.89 1098.14,439.57 1098.49,439.24 1098.84,438.88 1099.20,438.50 1099.55,438.10 1099.90,437.67 1100.25,437.21 1100.61,436.72 1100.96,436.20 1101.31,435.64 1101.66,435.06 1102.01,434.45 1102.37,433.81 1102.72,433.15 1103.07,432.45 1103.42,431.74 1103.78,431.00 1104.13,430.25 1104.48,429.48 1104.83,428.70 1105.18,427.91 1105.54,427.13 1105.89,426.34 1106.24,425.56 1106.59,424.79 1106.95,424.04 1107.30,423.32 1107.65,422.62 1108.00,421.95 1108.35,421.32 1108.71,420.73 1109.06,420.19 1109.41,419.70 1109.76,419.26 1110.12,418.89 1110.47,418.58 1110.82,418.33 1111.17,418.15 1111.52,418.04 1111.88,418.01 1112.23,418.05 1112.58,418.16 1112.93,418.34 1113.29,418.60 1113.64,418.93 1113.99,419.33 1114.34,419.80 1114.69,420.33 1115.05,420.92 1115.40,421.57 1115.75,422.27 1116.10,423.01 1116.46,423.80 1116.81,424.62 1117.16,425.47 1117.51,426.34 1117.86,427.23 1118.22,428.12 1118.57,429.02 1118.92,429.91 1119.27,430.78 1119.63,431.64 1119.98,432.47 1120.33,433.27 1120.68,434.02 1121.03,434.73 1121.39,435.39 1121.74,436.00 1122.09,436.54 1122.44,437.02 1122.80,437.42 1123.15,437.76 1123.50,438.02" fill="none" stroke="#199B32" stroke-width="1.1" stroke-linejoin="round"/>
</svg>
<div class="t " style="left:781px;top:240px;font-size:9.5px;letter-spacing:0.4px;line-height:10px">Oscyloskop</div>
<div class="t " style="left:475px;top:255px;font-size:9.5px;letter-spacing:0.4px;line-height:10px">-1</div>
<div class="t " style="left:478px;top:462px;font-size:9.5px;letter-spacing:0.4px;line-height:10px">0</div>
<div class="t " style="left:480px;top:669px;font-size:9.5px;letter-spacing:0.4px;line-height:10px">1</div>
<div class="t" style="left:469.5px;width:40px;top:691px;text-align:center;font-size:9.5px;letter-spacing:0.4px;line-height:10px">0°</div>
<div class="t" style="left:628.5px;width:40px;top:691px;text-align:center;font-size:9.5px;letter-spacing:0.4px;line-height:10px">90°</div>
<div class="t" style="left:786.5px;width:40px;top:691px;text-align:center;font-size:9.5px;letter-spacing:0.4px;line-height:10px">180°</div>
<div class="t" style="left:945.5px;width:40px;top:691px;text-align:center;font-size:9.5px;letter-spacing:0.4px;line-height:10px">270°</div>
<div class="t" style="left:1103.5px;width:40px;top:691px;text-align:center;font-size:9.5px;letter-spacing:0.4px;line-height:10px">360°</div>
<div class="t" style="left:781.5px;width:50px;top:703px;text-align:center;font-size:9.5px;letter-spacing:0.4px;line-height:10px">Faza [°]</div>
<div class="t" style="left:423px;top:462px;width:60px;text-align:center;transform:rotate(-90deg);font-size:9.5px;letter-spacing:0.4px;line-height:10px">Amplituda</div>
<div class="a etch" style="left:201px;top:762px;width:948px;height:55px;"></div>
<div class="a " style="left:575px;top:757px;width:199px;height:12px;background:#D4D0C8"><div class="t" style="left:2.5px;top:0;letter-spacing:-0.17px">Ładowanie harmonicznych do kalibratora</div></div>
<div class="rad" style="left:212px;top:768px"></div>
<div class="t " style="left:229px;top:768px;">U1 dla wszystkich wyjść</div>
<div class="rad" style="left:212px;top:783px"><div class="a" style="left:3px;top:3px;width:4px;height:4px;border-radius:50%;background:#000"></div></div>
<div class="t " style="left:229px;top:783px;">U1 dla U, I1 dla I</div>
<div class="rad" style="left:212px;top:798px"></div>
<div class="t " style="left:229px;top:798px;">Indywidualnie</div>
<div class="a rais" style="left:446px;top:789px;width:80px;height:23px;"><div class="t" style="left:0;right:0;top:5px;text-align:center">Ładuj</div></div>
<div class="t " style="left:541.5px;top:794.5px;">0%</div>
<div class="a " style="left:561px;top:789px;width:550px;height:23px;border-top:1px solid #808080;border-left:1px solid #808080;border-bottom:1px solid #fff;border-right:1px solid #fff"></div>
<div class="t " style="left:1114px;top:795px;">100%</div>
<div class="a" style="left:0px;top:817px;width:1152px;height:1px;background:#fff"></div>
<div class="a " style="left:832px;top:820px;width:229px;height:17px;border-top:1px solid #808080;border-left:1px solid #808080;border-bottom:1px solid #fff;border-right:1px solid #fff"></div>
<div class="a " style="left:1063px;top:820px;width:26px;height:17px;border-top:1px solid #808080;border-left:1px solid #808080;border-bottom:1px solid #fff;border-right:1px solid #fff"></div>
<div class="a " style="left:1091px;top:820px;width:28px;height:17px;border-top:1px solid #808080;border-left:1px solid #808080;border-bottom:1px solid #fff;border-right:1px solid #fff"></div>
<div class="a " style="left:1121px;top:820px;width:31px;height:17px;border-top:1px solid #808080;border-left:1px solid #808080;border-bottom:1px solid #fff;border-right:1px solid #fff"></div>
<div class="t " style="left:834px;top:823px;letter-spacing:0.05px">Połączony: COM1,&nbsp;&nbsp; Firmware: v.2.6.5</div>
<div class="a" style="left:0px;top:837px;width:1152px;height:1px;background:#fff"></div>
<div class="a rais" style="left:2px;top:840px;width:52px;height:22px;"><svg style="position:absolute;left:3px;top:3px" width="16" height="16" viewBox="0 0 16 16">
<path d="M2 3c2-1 4-1 6 0v5c-2-1-4-1-6 0z" fill="#F25022"/><path d="M9 3c2 1 4 1 5 0v5c-1 1-3 1-5 0z" fill="#7FBA00"/>
<path d="M1 9c2-1 4-1 6 0v5c-2-1-4-1-6 0z" fill="#00A4EF"/><path d="M8 9c2 1 4 1 6 0v5c-2 1-4 1-6 0z" fill="#FFB900"/></svg>
<div class="t" style="left:21px;top:5px;font-weight:bold;letter-spacing:0.2px">Start</div></div>
<div class="a" style="left:60px;top:842px;width:1px;height:18px;background:#fff"></div>
<div class="a" style="left:61px;top:842px;width:1px;height:18px;background:#808080"></div>
<svg class="a" style="left:71px;top:842px" width="16" height="16" viewBox="0 0 16 16">
<rect x="1" y="2" width="13" height="13" rx="3" fill="#3A7BD5" stroke="#1D4FA0"/><rect x="4" y="5" width="8" height="8" rx="2" fill="#BFE0FF"/><path d="M6 10l5-5" stroke="#1D4FA0" stroke-width="1.5"/><circle cx="13" cy="3" r="1.5" fill="#E04020"/></svg>
<div class="a" style="left:97px;top:842px;width:1px;height:18px;background:#fff"></div>
<div class="a" style="left:98px;top:842px;width:1px;height:18px;background:#808080"></div>
<div class="a " style="left:104px;top:840px;width:161px;height:22px;background:repeating-conic-gradient(#fff 0 25%,#D4D0C8 0 50%) 0 0/2px 2px;border-top:1px solid #000;border-left:1px solid #000;border-bottom:1px solid #fff;border-right:1px solid #fff;box-shadow:inset 1px 1px #808080"><svg style="position:absolute;left:5px;top:4px" width="16" height="14" viewBox="0 0 16 14" shape-rendering="crispEdges">
<rect x="0" y="2" width="15" height="10" fill="#000"/><rect x="1" y="3" width="13" height="8" fill="#C0C0C0"/><rect x="2" y="4" width="12" height="7" fill="#000"/><rect x="3" y="5" width="10" height="5" fill="#D0D0D0"/>
<rect x="4" y="6" width="3" height="1" fill="#f00"/><rect x="4" y="8" width="3" height="1" fill="#f00"/><rect x="9" y="6" width="3" height="3" fill="#000"/><rect x="10" y="7" width="1" height="1" fill="#9ff"/></svg>
<div class="t" style="left:24px;top:5px;font-weight:bold;letter-spacing:0.3px">Calpro 300 - [kinkiet ...</div></div>
<div class="a" style="left:981px;top:843px;width:1px;height:17px;background:#fff"></div>
<div class="a" style="left:982px;top:843px;width:1px;height:17px;background:#808080"></div>
<div class="t " style="left:988px;top:846px;">Pulpit</div>
<div class="t " style="left:1022px;top:841px;font-weight:bold;font-size:13px;letter-spacing:0">»</div>
<div class="a " style="left:1034px;top:840px;width:116px;height:22px;border-top:1px solid #808080;border-left:1px solid #808080;border-bottom:1px solid #fff;border-right:1px solid #fff"></div>
<svg class="a" style="left:1038px;top:843px" width="72" height="16" viewBox="0 0 72 16">
<path d="M1.5 0.5h12v8c0 3-3 5-6 6.5-3-1.5-6-3.5-6-6.5z" fill="#E8C060" stroke="#A07820"/><path d="M5 1v12M9 1v12" stroke="#FFF0C0"/><circle cx="11" cy="11.5" r="3" fill="#FFE000" stroke="#808000"/><path d="M11 10v2" stroke="#000"/>
<circle cx="23" cy="7" r="6" fill="#8A8A8A" stroke="#505050"/><circle cx="21" cy="5" r="2.5" fill="#D0D0D0"/><path d="M27 11c2 1 2 3 0 5M29 9c3 2 3 5 0 7" stroke="#A0A0FF" fill="none"/>
<path d="M36 1l6 6 5-6M41 6l-3 4" stroke="#1F5FA8" stroke-width="2.5" fill="none"/><path d="M35 12h14M46 10l3 2-3 2" stroke="#000" stroke-width="1.5" fill="none"/><circle cx="35.5" cy="12" r="1.5" fill="#000"/>
<rect x="53" y="1" width="16" height="8" fill="#FFFF00"/><text x="53" y="8" font-family="Liberation Sans" font-size="7.5" font-style="italic" fill="#0000C0" textLength="16" lengthAdjust="spacingAndGlyphs">Xear</text><rect x="53" y="9" width="16" height="6" fill="#0000FF"/><text x="56" y="15" font-family="Liberation Sans" font-size="6.5" font-weight="bold" fill="#fff" textLength="10" lengthAdjust="spacingAndGlyphs">3D</text>
</svg>
<div class="t " style="left:1114px;top:846px;">18:08</div>
</div></body></html>
